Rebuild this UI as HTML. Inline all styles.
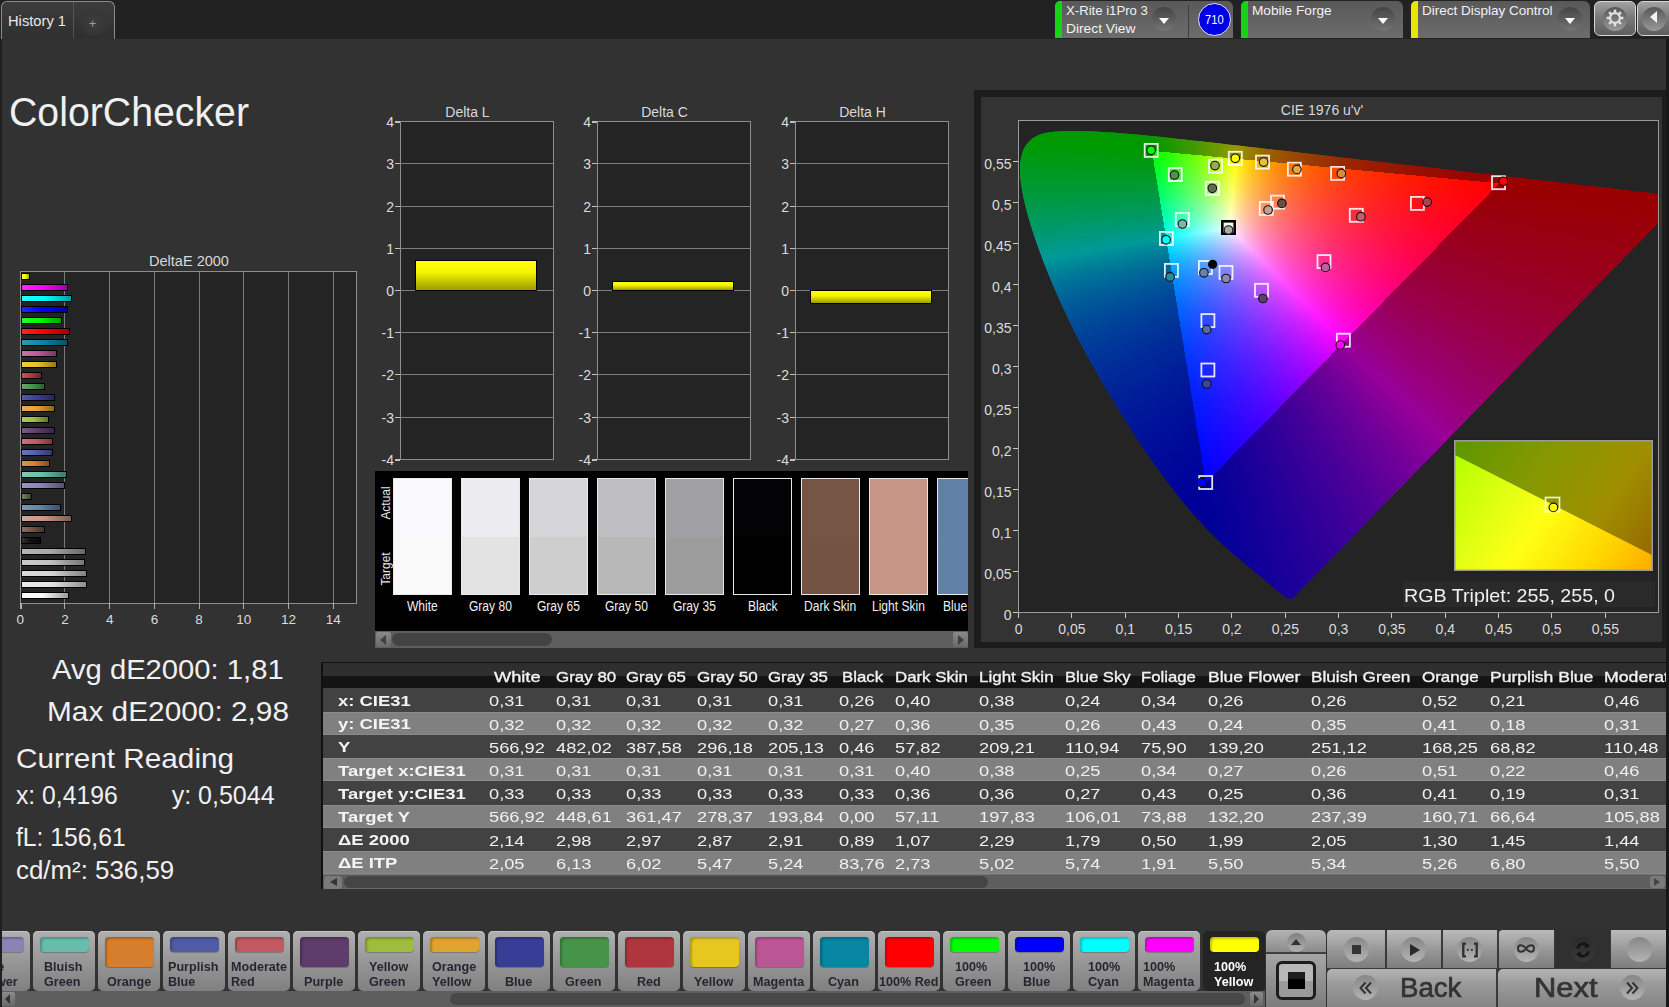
<!DOCTYPE html><html><head><meta charset="utf-8"><style>
*{margin:0;padding:0;box-sizing:border-box}
html,body{width:1669px;height:1007px;overflow:hidden;background:#323232;font-family:"Liberation Sans",sans-serif;color:#eee}
.a{position:absolute}
.t{position:absolute;white-space:nowrap;line-height:normal}
</style></head><body>
<div class="a" style="left:0px;top:0px;width:1669px;height:39px;background:#222222"></div><div class="a" style="left:1px;top:1px;width:114px;height:38px;background:linear-gradient(#3c3c3c,#2f2f2f);border:1px solid #8c8c8c;border-bottom:none;border-radius:6px 6px 0 0"></div><div class="a" style="left:73px;top:2px;width:1px;height:36px;background:#555"></div><div class="t" style="left:8.00px;top:13.33px;font-size:14px;color:#e8e8e8;transform:scaleX(1.0507);transform-origin:0 0;">History 1</div><div class="a" style="left:80.5px;top:10.5px;width:25px;height:25px;border-radius:50%;background:radial-gradient(circle at 50% 45%,#3e3e3e,#353535 70%,#2e2e2e)"></div><div class="t" style="left:88.70px;top:16.23px;font-size:13px;color:#9a9a9a;">+</div><div class="a" style="left:1055px;top:1px;width:178px;height:37px;background:linear-gradient(#595959,#6c6c6c);border-radius:6px 6px 0 0"></div><div class="a" style="left:1055px;top:1px;width:7px;height:37px;background:#14d414;border-radius:5px 0 0 0"></div><div class="t" style="left:1066.00px;top:3.23px;font-size:13px;color:#f2f2f2;transform:scaleX(1.0111);transform-origin:0 0;">X-Rite i1Pro 3</div><div class="t" style="left:1066.00px;top:21.28px;font-size:13.5px;color:#f2f2f2;transform:scaleX(1.0206);transform-origin:0 0;">Direct View</div><div class="a" style="left:1152px;top:7px;width:24px;height:24px;border-radius:50%;background:linear-gradient(#444,#747474)"></div><div class="a" style="left:1158.5px;top:18px;width:0;height:0;border-left:5.5px solid transparent;border-right:5.5px solid transparent;border-top:6px solid #fff"></div><div class="a" style="left:1188px;top:5px;width:1px;height:33px;background:#3e3e3e"></div><div class="a" style="left:1198px;top:3px;width:33px;height:33px;border-radius:50%;background:#0000e6;border:1.5px solid #e0e0ff"></div><div class="t" style="left:1205.20px;top:13.14px;font-size:12px;color:#fff;transform:scaleX(0.9300);transform-origin:0 0;">710</div><div class="a" style="left:1241px;top:1px;width:162px;height:37px;background:linear-gradient(#595959,#6c6c6c);border-radius:6px 6px 0 0"></div><div class="a" style="left:1241px;top:1px;width:7px;height:37px;background:#14d414;border-radius:5px 0 0 0"></div><div class="t" style="left:1252.00px;top:3.23px;font-size:13px;color:#f2f2f2;transform:scaleX(1.0501);transform-origin:0 0;">Mobile Forge</div><div class="a" style="left:1371px;top:7px;width:24px;height:24px;border-radius:50%;background:linear-gradient(#444,#747474)"></div><div class="a" style="left:1377.5px;top:18px;width:0;height:0;border-left:5.5px solid transparent;border-right:5.5px solid transparent;border-top:6px solid #fff"></div><div class="a" style="left:1411px;top:1px;width:179px;height:37px;background:linear-gradient(#595959,#6c6c6c);border-radius:6px 6px 0 0"></div><div class="a" style="left:1411px;top:1px;width:7px;height:37px;background:#e6e600;border-radius:5px 0 0 0"></div><div class="t" style="left:1422.00px;top:3.23px;font-size:13px;color:#f2f2f2;transform:scaleX(1.0390);transform-origin:0 0;">Direct Display Control</div><div class="a" style="left:1558px;top:7px;width:24px;height:24px;border-radius:50%;background:linear-gradient(#444,#747474)"></div><div class="a" style="left:1564.5px;top:18px;width:0;height:0;border-left:5.5px solid transparent;border-right:5.5px solid transparent;border-top:6px solid #fff"></div><div class="a" style="left:1594px;top:1px;width:42px;height:35px;background:linear-gradient(#a2a2a2,#7a7a7a 45%,#5e5e5e);border:1.2px solid #d6d6d6;border-radius:6px"></div><div class="a" style="left:1602.8px;top:6.6px;width:24px;height:24px;border-radius:50%;background:linear-gradient(#565656,#9a9a9a)"></div><svg class="a" style="left:1604.8px;top:7.9px" width="20" height="20" viewBox="0 0 20 20"><g fill="#e0e0e0"><rect x="8.75" y="1.6" width="2.5" height="4" transform="rotate(0 10 10)"/><rect x="8.75" y="1.6" width="2.5" height="4" transform="rotate(45 10 10)"/><rect x="8.75" y="1.6" width="2.5" height="4" transform="rotate(90 10 10)"/><rect x="8.75" y="1.6" width="2.5" height="4" transform="rotate(135 10 10)"/><rect x="8.75" y="1.6" width="2.5" height="4" transform="rotate(180 10 10)"/><rect x="8.75" y="1.6" width="2.5" height="4" transform="rotate(225 10 10)"/><rect x="8.75" y="1.6" width="2.5" height="4" transform="rotate(270 10 10)"/><rect x="8.75" y="1.6" width="2.5" height="4" transform="rotate(315 10 10)"/></g><circle cx="10" cy="10" r="4.9" fill="none" stroke="#e0e0e0" stroke-width="2.2"/></svg><div class="a" style="left:1637px;top:1px;width:40px;height:35px;background:linear-gradient(#a2a2a2,#7a7a7a 45%,#5e5e5e);border:1.2px solid #d6d6d6;border-radius:6px"></div><div class="a" style="left:1641.5px;top:6.6px;width:24px;height:24px;border-radius:50%;background:linear-gradient(#565656,#9a9a9a)"></div><div class="a" style="left:1650px;top:11px;width:0;height:0;border-top:6.5px solid transparent;border-bottom:6.5px solid transparent;border-right:7.5px solid #f4f4f4"></div><div class="t" style="left:8.60px;top:89.60px;font-size:40px;color:#f0f0f0;transform:scaleX(0.9816);transform-origin:0 0;">ColorChecker</div><div class="t" style="left:148.50px;top:253.13px;font-size:14px;color:#d8d8d8;transform:scaleX(1.0376);transform-origin:0 0;">DeltaE 2000</div><div class="a" style="left:20px;top:271px;width:337px;height:333px;background:#242424;border:1px solid #8e8e8e"></div><div class="a" style="left:64px;top:272px;width:1px;height:331px;background:#7a7a7a"></div><div class="a" style="left:109px;top:272px;width:1px;height:331px;background:#7a7a7a"></div><div class="a" style="left:154px;top:272px;width:1px;height:331px;background:#7a7a7a"></div><div class="a" style="left:199px;top:272px;width:1px;height:331px;background:#7a7a7a"></div><div class="a" style="left:243px;top:272px;width:1px;height:331px;background:#7a7a7a"></div><div class="a" style="left:288px;top:272px;width:1px;height:331px;background:#7a7a7a"></div><div class="a" style="left:333px;top:272px;width:1px;height:331px;background:#7a7a7a"></div><div class="a" style="left:20px;top:603px;width:2px;height:6px;background:#b0b0b0"></div><div class="t" style="left:16.55px;top:612.38px;font-size:13.5px;color:#dcdcdc;">0</div><div class="a" style="left:64px;top:603px;width:1px;height:6px;background:#b0b0b0"></div><div class="t" style="left:61.25px;top:612.38px;font-size:13.5px;color:#dcdcdc;">2</div><div class="a" style="left:109px;top:603px;width:1px;height:6px;background:#b0b0b0"></div><div class="t" style="left:105.95px;top:612.38px;font-size:13.5px;color:#dcdcdc;">4</div><div class="a" style="left:154px;top:603px;width:1px;height:6px;background:#b0b0b0"></div><div class="t" style="left:150.65px;top:612.38px;font-size:13.5px;color:#dcdcdc;">6</div><div class="a" style="left:199px;top:603px;width:1px;height:6px;background:#b0b0b0"></div><div class="t" style="left:195.35px;top:612.38px;font-size:13.5px;color:#dcdcdc;">8</div><div class="a" style="left:243px;top:603px;width:1px;height:6px;background:#b0b0b0"></div><div class="t" style="left:236.30px;top:612.38px;font-size:13.5px;color:#dcdcdc;">10</div><div class="a" style="left:288px;top:603px;width:1px;height:6px;background:#b0b0b0"></div><div class="t" style="left:281.00px;top:612.38px;font-size:13.5px;color:#dcdcdc;">12</div><div class="a" style="left:333px;top:603px;width:1px;height:6px;background:#b0b0b0"></div><div class="t" style="left:325.70px;top:612.38px;font-size:13.5px;color:#dcdcdc;">14</div><div class="a" style="left:21px;top:273px;width:9.0px;height:7px;border:1px solid #000;background:linear-gradient(90deg,#ffff26,#ffff00 45%,#9e9e00)"></div><div class="a" style="left:21px;top:284px;width:47.4px;height:7px;border:1px solid #000;background:linear-gradient(90deg,#ff26ff,#ff00ff 45%,#9e009e)"></div><div class="a" style="left:21px;top:295px;width:51.4px;height:7px;border:1px solid #000;background:linear-gradient(90deg,#26ffff,#00ffff 45%,#009e9e)"></div><div class="a" style="left:21px;top:306px;width:47.4px;height:7px;border:1px solid #000;background:linear-gradient(90deg,#2626ff,#0000ff 45%,#00009e)"></div><div class="a" style="left:21px;top:317px;width:41.1px;height:7px;border:1px solid #000;background:linear-gradient(90deg,#26ff26,#00ff00 45%,#009e00)"></div><div class="a" style="left:21px;top:328px;width:49.4px;height:7px;border:1px solid #000;background:linear-gradient(90deg,#ff2626,#ff0000 45%,#9e0000)"></div><div class="a" style="left:21px;top:339px;width:47.4px;height:7px;border:1px solid #000;background:linear-gradient(90deg,#2e99b2,#0a87a5 45%,#065366)"></div><div class="a" style="left:21px;top:350px;width:36.2px;height:7px;border:1px solid #000;background:linear-gradient(90deg,#c972a7,#c05a98 45%,#77375e)"></div><div class="a" style="left:21px;top:361px;width:35.6px;height:7px;border:1px solid #000;background:linear-gradient(90deg,#ebcc43,#e8c422 45%,#8f7915)"></div><div class="a" style="left:21px;top:372px;width:21.3px;height:7px;border:1px solid #000;background:linear-gradient(90deg,#bd575e,#b23a42 45%,#6e2328)"></div><div class="a" style="left:21px;top:383px;width:24.4px;height:7px;border:1px solid #000;background:linear-gradient(90deg,#65a566,#4a964c 45%,#2d5d2f)"></div><div class="a" style="left:21px;top:394px;width:34.4px;height:7px;border:1px solid #000;background:linear-gradient(90deg,#575ca5,#3a4096 45%,#23275d)"></div><div class="a" style="left:21px;top:405px;width:34.4px;height:7px;border:1px solid #000;background:linear-gradient(90deg,#e8af4f,#e5a230 45%,#8d641d)"></div><div class="a" style="left:21px;top:416px;width:28.4px;height:7px;border:1px solid #000;background:linear-gradient(90deg,#aec760,#a0be44 45%,#63752a)"></div><div class="a" style="left:21px;top:427px;width:34.4px;height:7px;border:1px solid #000;background:linear-gradient(90deg,#765a85,#5e3e70 45%,#3a2645)"></div><div class="a" style="left:21px;top:438px;width:31.5px;height:7px;border:1px solid #000;background:linear-gradient(90deg,#cc727b,#c45a64 45%,#79373e)"></div><div class="a" style="left:21px;top:449px;width:32.2px;height:7px;border:1px solid #000;background:linear-gradient(90deg,#6a77b6,#5060aa 45%,#313b69)"></div><div class="a" style="left:21px;top:460px;width:28.9px;height:7px;border:1px solid #000;background:linear-gradient(90deg,#de934f,#d98030 45%,#864f1d)"></div><div class="a" style="left:21px;top:471px;width:45.6px;height:7px;border:1px solid #000;background:linear-gradient(90deg,#80c9b6,#6ac0aa 45%,#417769)"></div><div class="a" style="left:21px;top:482px;width:44.3px;height:7px;border:1px solid #000;background:linear-gradient(90deg,#9996c0,#8884b6 45%,#545170)"></div><div class="a" style="left:21px;top:493px;width:11.0px;height:7px;border:1px solid #000;background:linear-gradient(90deg,#718360,#596e44 45%,#37442a)"></div><div class="a" style="left:21px;top:504px;width:39.8px;height:7px;border:1px solid #000;background:linear-gradient(90deg,#7996b8,#6284ac 45%,#3c516a)"></div><div class="a" style="left:21px;top:515px;width:51.0px;height:7px;border:1px solid #000;background:linear-gradient(90deg,#d0a798,#c89886 45%,#7c5e53)"></div><div class="a" style="left:21px;top:526px;width:23.7px;height:7px;border:1px solid #000;background:linear-gradient(90deg,#8a6d61,#765446 45%,#49342b)"></div><div class="a" style="left:21px;top:537px;width:19.7px;height:7px;border:1px solid #000;background:linear-gradient(90deg,#333333,#101010 45%,#090909)"></div><div class="a" style="left:21px;top:548px;width:64.8px;height:7px;border:1px solid #000;background:linear-gradient(90deg,#b5b5b5,#a8a8a8 45%,#686868)"></div><div class="a" style="left:21px;top:559px;width:63.9px;height:7px;border:1px solid #000;background:linear-gradient(90deg,#c9c9c9,#c0c0c0 45%,#777777)"></div><div class="a" style="left:21px;top:570px;width:66.2px;height:7px;border:1px solid #000;background:linear-gradient(90deg,#dadada,#d4d4d4 45%,#838383)"></div><div class="a" style="left:21px;top:581px;width:66.4px;height:7px;border:1px solid #000;background:linear-gradient(90deg,#e9e9e9,#e6e6e6 45%,#8e8e8e)"></div><div class="a" style="left:21px;top:592px;width:47.6px;height:7px;border:1px solid #000;background:linear-gradient(90deg,#fafafa,#fafafa 45%,#9b9b9b)"></div><div class="t" style="left:445.30px;top:104.33px;font-size:14px;color:#d8d8d8;">Delta L</div><div class="a" style="left:400px;top:121px;width:154px;height:339px;background:#242424;border:1px solid #8e8e8e"></div><div class="a" style="left:401px;top:163px;width:152px;height:1px;background:#7e7e7e"></div><div class="a" style="left:401px;top:206px;width:152px;height:1px;background:#7e7e7e"></div><div class="a" style="left:401px;top:248px;width:152px;height:1px;background:#7e7e7e"></div><div class="a" style="left:401px;top:290px;width:152px;height:1px;background:#7e7e7e"></div><div class="a" style="left:401px;top:332px;width:152px;height:1px;background:#7e7e7e"></div><div class="a" style="left:401px;top:374px;width:152px;height:1px;background:#7e7e7e"></div><div class="a" style="left:401px;top:417px;width:152px;height:1px;background:#7e7e7e"></div><div class="a" style="left:395px;top:121px;width:5px;height:2px;background:#c0c0c0"></div><div class="t" style="left:386.20px;top:114.33px;font-size:14px;color:#dcdcdc;">4</div><div class="a" style="left:395px;top:163px;width:5px;height:1px;background:#c0c0c0"></div><div class="t" style="left:386.20px;top:156.33px;font-size:14px;color:#dcdcdc;">3</div><div class="a" style="left:395px;top:206px;width:5px;height:1px;background:#c0c0c0"></div><div class="t" style="left:386.20px;top:199.33px;font-size:14px;color:#dcdcdc;">2</div><div class="a" style="left:395px;top:248px;width:5px;height:1px;background:#c0c0c0"></div><div class="t" style="left:386.20px;top:241.33px;font-size:14px;color:#dcdcdc;">1</div><div class="a" style="left:395px;top:290px;width:5px;height:1px;background:#c0c0c0"></div><div class="t" style="left:386.20px;top:283.33px;font-size:14px;color:#dcdcdc;">0</div><div class="a" style="left:395px;top:332px;width:5px;height:1px;background:#c0c0c0"></div><div class="t" style="left:381.60px;top:325.33px;font-size:14px;color:#dcdcdc;">-1</div><div class="a" style="left:395px;top:374px;width:5px;height:1px;background:#c0c0c0"></div><div class="t" style="left:381.60px;top:367.33px;font-size:14px;color:#dcdcdc;">-2</div><div class="a" style="left:395px;top:417px;width:5px;height:1px;background:#c0c0c0"></div><div class="t" style="left:381.60px;top:410.33px;font-size:14px;color:#dcdcdc;">-3</div><div class="a" style="left:395px;top:459px;width:5px;height:2px;background:#c0c0c0"></div><div class="t" style="left:381.60px;top:452.33px;font-size:14px;color:#dcdcdc;">-4</div><div class="a" style="left:415px;top:259.6px;width:122px;height:31.4px;border:1.5px solid #000;background:linear-gradient(#ffff10,#f4f400 40%,#9a9a00)"></div><div class="t" style="left:641.15px;top:104.33px;font-size:14px;color:#d8d8d8;">Delta C</div><div class="a" style="left:597px;top:121px;width:154px;height:339px;background:#242424;border:1px solid #8e8e8e"></div><div class="a" style="left:598px;top:163px;width:152px;height:1px;background:#7e7e7e"></div><div class="a" style="left:598px;top:206px;width:152px;height:1px;background:#7e7e7e"></div><div class="a" style="left:598px;top:248px;width:152px;height:1px;background:#7e7e7e"></div><div class="a" style="left:598px;top:290px;width:152px;height:1px;background:#7e7e7e"></div><div class="a" style="left:598px;top:332px;width:152px;height:1px;background:#7e7e7e"></div><div class="a" style="left:598px;top:374px;width:152px;height:1px;background:#7e7e7e"></div><div class="a" style="left:598px;top:417px;width:152px;height:1px;background:#7e7e7e"></div><div class="a" style="left:592px;top:121px;width:5px;height:2px;background:#c0c0c0"></div><div class="t" style="left:583.20px;top:114.33px;font-size:14px;color:#dcdcdc;">4</div><div class="a" style="left:592px;top:163px;width:5px;height:1px;background:#c0c0c0"></div><div class="t" style="left:583.20px;top:156.33px;font-size:14px;color:#dcdcdc;">3</div><div class="a" style="left:592px;top:206px;width:5px;height:1px;background:#c0c0c0"></div><div class="t" style="left:583.20px;top:199.33px;font-size:14px;color:#dcdcdc;">2</div><div class="a" style="left:592px;top:248px;width:5px;height:1px;background:#c0c0c0"></div><div class="t" style="left:583.20px;top:241.33px;font-size:14px;color:#dcdcdc;">1</div><div class="a" style="left:592px;top:290px;width:5px;height:1px;background:#c0c0c0"></div><div class="t" style="left:583.20px;top:283.33px;font-size:14px;color:#dcdcdc;">0</div><div class="a" style="left:592px;top:332px;width:5px;height:1px;background:#c0c0c0"></div><div class="t" style="left:578.60px;top:325.33px;font-size:14px;color:#dcdcdc;">-1</div><div class="a" style="left:592px;top:374px;width:5px;height:1px;background:#c0c0c0"></div><div class="t" style="left:578.60px;top:367.33px;font-size:14px;color:#dcdcdc;">-2</div><div class="a" style="left:592px;top:417px;width:5px;height:1px;background:#c0c0c0"></div><div class="t" style="left:578.60px;top:410.33px;font-size:14px;color:#dcdcdc;">-3</div><div class="a" style="left:592px;top:459px;width:5px;height:2px;background:#c0c0c0"></div><div class="t" style="left:578.60px;top:452.33px;font-size:14px;color:#dcdcdc;">-4</div><div class="a" style="left:612px;top:281.1px;width:122px;height:9.9px;border:1.5px solid #000;background:linear-gradient(#ffff10,#f4f400 40%,#9a9a00)"></div><div class="t" style="left:839.15px;top:104.33px;font-size:14px;color:#d8d8d8;">Delta H</div><div class="a" style="left:795px;top:121px;width:154px;height:339px;background:#242424;border:1px solid #8e8e8e"></div><div class="a" style="left:796px;top:163px;width:152px;height:1px;background:#7e7e7e"></div><div class="a" style="left:796px;top:206px;width:152px;height:1px;background:#7e7e7e"></div><div class="a" style="left:796px;top:248px;width:152px;height:1px;background:#7e7e7e"></div><div class="a" style="left:796px;top:290px;width:152px;height:1px;background:#7e7e7e"></div><div class="a" style="left:796px;top:332px;width:152px;height:1px;background:#7e7e7e"></div><div class="a" style="left:796px;top:374px;width:152px;height:1px;background:#7e7e7e"></div><div class="a" style="left:796px;top:417px;width:152px;height:1px;background:#7e7e7e"></div><div class="a" style="left:790px;top:121px;width:5px;height:2px;background:#c0c0c0"></div><div class="t" style="left:781.20px;top:114.33px;font-size:14px;color:#dcdcdc;">4</div><div class="a" style="left:790px;top:163px;width:5px;height:1px;background:#c0c0c0"></div><div class="t" style="left:781.20px;top:156.33px;font-size:14px;color:#dcdcdc;">3</div><div class="a" style="left:790px;top:206px;width:5px;height:1px;background:#c0c0c0"></div><div class="t" style="left:781.20px;top:199.33px;font-size:14px;color:#dcdcdc;">2</div><div class="a" style="left:790px;top:248px;width:5px;height:1px;background:#c0c0c0"></div><div class="t" style="left:781.20px;top:241.33px;font-size:14px;color:#dcdcdc;">1</div><div class="a" style="left:790px;top:290px;width:5px;height:1px;background:#c0c0c0"></div><div class="t" style="left:781.20px;top:283.33px;font-size:14px;color:#dcdcdc;">0</div><div class="a" style="left:790px;top:332px;width:5px;height:1px;background:#c0c0c0"></div><div class="t" style="left:776.60px;top:325.33px;font-size:14px;color:#dcdcdc;">-1</div><div class="a" style="left:790px;top:374px;width:5px;height:1px;background:#c0c0c0"></div><div class="t" style="left:776.60px;top:367.33px;font-size:14px;color:#dcdcdc;">-2</div><div class="a" style="left:790px;top:417px;width:5px;height:1px;background:#c0c0c0"></div><div class="t" style="left:776.60px;top:410.33px;font-size:14px;color:#dcdcdc;">-3</div><div class="a" style="left:790px;top:459px;width:5px;height:2px;background:#c0c0c0"></div><div class="t" style="left:776.60px;top:452.33px;font-size:14px;color:#dcdcdc;">-4</div><div class="a" style="left:810px;top:290.0px;width:122px;height:13.7px;border:1.5px solid #000;background:linear-gradient(#ffff10,#f4f400 40%,#9a9a00)"></div><div class="a" style="left:375px;top:471px;width:593px;height:160px;background:#000"></div><div class="a" style="left:375px;top:471px;width:593px;height:160px;overflow:hidden"><div class="a" style="left:18px;top:7px;width:59px;height:117px;border:1px solid #e8e8e8;background:linear-gradient(#f8f8fd 50%,#f9f9f9 50%)"></div><div class="a" style="left:86px;top:7px;width:59px;height:117px;border:1px solid #e8e8e8;background:linear-gradient(#ececf0 50%,#e3e3e3 50%)"></div><div class="a" style="left:154px;top:7px;width:59px;height:117px;border:1px solid #e8e8e8;background:linear-gradient(#d6d6da 50%,#cecece 50%)"></div><div class="a" style="left:222px;top:7px;width:59px;height:117px;border:1px solid #e8e8e8;background:linear-gradient(#bfbfc3 50%,#b8b8b8 50%)"></div><div class="a" style="left:290px;top:7px;width:59px;height:117px;border:1px solid #e8e8e8;background:linear-gradient(#a1a1a5 50%,#9c9c9c 50%)"></div><div class="a" style="left:358px;top:7px;width:59px;height:117px;border:1px solid #e8e8e8;background:linear-gradient(#040407 50%,#000000 50%)"></div><div class="a" style="left:426px;top:7px;width:59px;height:117px;border:1px solid #e8e8e8;background:linear-gradient(#765446 50%,#755344 50%)"></div><div class="a" style="left:494px;top:7px;width:59px;height:117px;border:1px solid #e8e8e8;background:linear-gradient(#c69585 50%,#c69584 50%)"></div><div class="a" style="left:562px;top:7px;width:59px;height:117px;border:1px solid #e8e8e8;background:linear-gradient(#6180a8 50%,#6181a9 50%)"></div></div><div class="a" style="left:375px;top:471px;width:593px;height:160px;overflow:hidden"><div class="t" style="left:32.1px;top:126.9px;font-size:14px;color:#f0f0f0;transform:scaleX(0.86);transform-origin:0 0">White</div><div class="t" style="left:94.1px;top:126.9px;font-size:14px;color:#f0f0f0;transform:scaleX(0.86);transform-origin:0 0">Gray 80</div><div class="t" style="left:162.1px;top:126.9px;font-size:14px;color:#f0f0f0;transform:scaleX(0.86);transform-origin:0 0">Gray 65</div><div class="t" style="left:230.1px;top:126.9px;font-size:14px;color:#f0f0f0;transform:scaleX(0.86);transform-origin:0 0">Gray 50</div><div class="t" style="left:298.1px;top:126.9px;font-size:14px;color:#f0f0f0;transform:scaleX(0.86);transform-origin:0 0">Gray 35</div><div class="t" style="left:372.8px;top:126.9px;font-size:14px;color:#f0f0f0;transform:scaleX(0.86);transform-origin:0 0">Black</div><div class="t" style="left:429.4px;top:126.9px;font-size:14px;color:#f0f0f0;transform:scaleX(0.86);transform-origin:0 0">Dark Skin</div><div class="t" style="left:497.1px;top:126.9px;font-size:14px;color:#f0f0f0;transform:scaleX(0.86);transform-origin:0 0">Light Skin</div><div class="t" style="left:567.8px;top:126.9px;font-size:14px;color:#f0f0f0;transform:scaleX(0.86);transform-origin:0 0">Blue Sky</div></div><div class="t" style="left:384.5px;top:503px;font-size:13px;color:#e8e8e8;transform:translate(-50%,-50%) rotate(-90deg) scaleX(0.92)">Actual</div><div class="t" style="left:384.5px;top:569px;font-size:13px;color:#e8e8e8;transform:translate(-50%,-50%) rotate(-90deg) scaleX(0.92)">Target</div><div class="a" style="left:375px;top:631px;width:593px;height:17px;background:#5e5e5e"></div><div class="a" style="left:392px;top:633px;width:160px;height:13px;background:#434343;border-radius:7px"></div><div class="a" style="left:376px;top:632px;width:15px;height:15px;background:linear-gradient(#8a8a8a,#6a6a6a);border-radius:2px"></div><div class="a" style="left:380px;top:635px;width:0;height:0;border-top:5px solid transparent;border-bottom:5px solid transparent;border-right:6px solid #404040"></div><div class="a" style="left:953px;top:632px;width:15px;height:15px;background:linear-gradient(#8a8a8a,#6a6a6a);border-radius:2px"></div><div class="a" style="left:958px;top:635px;width:0;height:0;border-top:5px solid transparent;border-bottom:5px solid transparent;border-left:6px solid #404040"></div><div class="t" style="left:51.50px;top:654.46px;font-size:28px;color:#f0f0f0;transform:scaleX(1.0428);transform-origin:0 0;">Avg dE2000: 1,81</div><div class="t" style="left:47.00px;top:695.56px;font-size:28px;color:#f0f0f0;transform:scaleX(1.0647);transform-origin:0 0;">Max dE2000: 2,98</div><div class="t" style="left:15.60px;top:743.46px;font-size:28px;color:#f0f0f0;transform:scaleX(1.0613);transform-origin:0 0;">Current Reading</div><div class="t" style="left:15.60px;top:780.98px;font-size:25px;color:#f0f0f0;transform:scaleX(0.9893);transform-origin:0 0;">x: 0,4196</div><div class="t" style="left:171.70px;top:780.98px;font-size:25px;color:#f0f0f0;">y: 0,5044</div><div class="t" style="left:15.60px;top:822.58px;font-size:25px;color:#f0f0f0;transform:scaleX(0.9856);transform-origin:0 0;">fL: 156,61</div><div class="t" style="left:15.60px;top:856.17px;font-size:25px;color:#f0f0f0;transform:scaleX(1.0347);transform-origin:0 0;">cd/m²: 536,59</div><div class="a" style="left:974px;top:90px;width:695px;height:558px;background:#1c1c1c"></div><div class="a" style="left:981px;top:97px;width:681px;height:545px;background:#333333"></div><div class="t" style="left:1280.80px;top:101.83px;font-size:14px;color:#d8d8d8;">CIE 1976 u'v'</div><div class="a" style="left:1018px;top:120px;width:641px;height:493px;background:#242424;border:1px solid #9a9a9a"></div><div class="a" style="left:1013px;top:612px;width:5px;height:1px;background:#c8c8c8"></div><div class="t" style="left:1003.70px;top:606.93px;font-size:14px;color:#dcdcdc;">0</div><div class="a" style="left:1018px;top:613px;width:1px;height:5px;background:#c8c8c8"></div><div class="t" style="left:1014.70px;top:620.63px;font-size:14px;color:#dcdcdc;">0</div><div class="a" style="left:1013px;top:571px;width:5px;height:1px;background:#c8c8c8"></div><div class="t" style="left:984.30px;top:565.93px;font-size:14px;color:#dcdcdc;">0,05</div><div class="a" style="left:1071px;top:613px;width:1px;height:5px;background:#c8c8c8"></div><div class="t" style="left:1058.34px;top:620.63px;font-size:14px;color:#dcdcdc;">0,05</div><div class="a" style="left:1013px;top:530px;width:5px;height:1px;background:#c8c8c8"></div><div class="t" style="left:992.00px;top:524.93px;font-size:14px;color:#dcdcdc;">0,1</div><div class="a" style="left:1125px;top:613px;width:1px;height:5px;background:#c8c8c8"></div><div class="t" style="left:1115.52px;top:620.63px;font-size:14px;color:#dcdcdc;">0,1</div><div class="a" style="left:1013px;top:489px;width:5px;height:1px;background:#c8c8c8"></div><div class="t" style="left:984.30px;top:483.93px;font-size:14px;color:#dcdcdc;">0,15</div><div class="a" style="left:1178px;top:613px;width:1px;height:5px;background:#c8c8c8"></div><div class="t" style="left:1165.01px;top:620.63px;font-size:14px;color:#dcdcdc;">0,15</div><div class="a" style="left:1013px;top:448px;width:5px;height:1px;background:#c8c8c8"></div><div class="t" style="left:992.00px;top:442.93px;font-size:14px;color:#dcdcdc;">0,2</div><div class="a" style="left:1231px;top:613px;width:1px;height:5px;background:#c8c8c8"></div><div class="t" style="left:1222.19px;top:620.63px;font-size:14px;color:#dcdcdc;">0,2</div><div class="a" style="left:1013px;top:407px;width:5px;height:1px;background:#c8c8c8"></div><div class="t" style="left:984.30px;top:401.93px;font-size:14px;color:#dcdcdc;">0,25</div><div class="a" style="left:1285px;top:613px;width:1px;height:5px;background:#c8c8c8"></div><div class="t" style="left:1271.68px;top:620.63px;font-size:14px;color:#dcdcdc;">0,25</div><div class="a" style="left:1013px;top:366px;width:5px;height:1px;background:#c8c8c8"></div><div class="t" style="left:992.00px;top:360.93px;font-size:14px;color:#dcdcdc;">0,3</div><div class="a" style="left:1338px;top:613px;width:1px;height:5px;background:#c8c8c8"></div><div class="t" style="left:1328.86px;top:620.63px;font-size:14px;color:#dcdcdc;">0,3</div><div class="a" style="left:1013px;top:325px;width:5px;height:1px;background:#c8c8c8"></div><div class="t" style="left:984.30px;top:319.93px;font-size:14px;color:#dcdcdc;">0,35</div><div class="a" style="left:1391px;top:613px;width:1px;height:5px;background:#c8c8c8"></div><div class="t" style="left:1378.35px;top:620.63px;font-size:14px;color:#dcdcdc;">0,35</div><div class="a" style="left:1013px;top:284px;width:5px;height:1px;background:#c8c8c8"></div><div class="t" style="left:992.00px;top:278.93px;font-size:14px;color:#dcdcdc;">0,4</div><div class="a" style="left:1445px;top:613px;width:1px;height:5px;background:#c8c8c8"></div><div class="t" style="left:1435.53px;top:620.63px;font-size:14px;color:#dcdcdc;">0,4</div><div class="a" style="left:1013px;top:243px;width:5px;height:1px;background:#c8c8c8"></div><div class="t" style="left:984.30px;top:237.93px;font-size:14px;color:#dcdcdc;">0,45</div><div class="a" style="left:1498px;top:613px;width:1px;height:5px;background:#c8c8c8"></div><div class="t" style="left:1485.02px;top:620.63px;font-size:14px;color:#dcdcdc;">0,45</div><div class="a" style="left:1013px;top:202px;width:5px;height:1px;background:#c8c8c8"></div><div class="t" style="left:992.00px;top:196.93px;font-size:14px;color:#dcdcdc;">0,5</div><div class="a" style="left:1551px;top:613px;width:1px;height:5px;background:#c8c8c8"></div><div class="t" style="left:1542.20px;top:620.63px;font-size:14px;color:#dcdcdc;">0,5</div><div class="a" style="left:1013px;top:161px;width:5px;height:1px;background:#c8c8c8"></div><div class="t" style="left:984.30px;top:155.93px;font-size:14px;color:#dcdcdc;">0,55</div><div class="a" style="left:1605px;top:613px;width:1px;height:5px;background:#c8c8c8"></div><div class="t" style="left:1591.69px;top:620.63px;font-size:14px;color:#dcdcdc;">0,55</div><div class="a" style="left:1019px;top:121px;width:639px;height:491px;overflow:hidden;clip-path:path('M273.53,477.49 L273.47,477.54 L273.37,477.61 L273.26,477.69 L273.12,477.76 L272.97,477.84 L272.79,477.91 L272.59,477.98 L272.35,478.03 L272.11,478.07 L271.84,478.10 L271.52,478.10 L271.11,478.04 L270.59,477.92 L269.97,477.76 L269.30,477.54 L268.63,477.25 L267.98,476.89 L267.32,476.46 L266.63,475.97 L265.86,475.42 L265.04,474.81 L264.16,474.14 L263.21,473.40 L262.14,472.55 L260.94,471.60 L259.63,470.55 L258.23,469.41 L256.74,468.18 L255.18,466.87 L253.54,465.46 L251.80,463.97 L249.94,462.39 L247.98,460.76 L245.92,459.05 L243.73,457.24 L241.35,455.28 L238.77,453.17 L236.02,450.93 L233.11,448.55 L230.07,446.04 L226.91,443.44 L223.62,440.74 L220.17,437.85 L216.50,434.70 L212.63,431.33 L208.57,427.75 L204.31,423.89 L199.84,419.67 L195.23,415.22 L190.45,410.55 L185.37,405.34 L179.83,399.30 L173.77,392.40 L167.27,384.76 L160.41,376.40 L153.29,367.29 L145.85,357.43 L138.08,346.81 L130.08,335.49 L121.94,323.51 L113.60,310.75 L105.03,297.21 L96.41,283.21 L87.94,269.02 L79.50,254.55 L71.05,239.69 L62.86,224.77 L55.21,210.10 L48.12,195.58 L41.46,181.11 L35.28,166.99 L29.64,153.52 L24.52,140.69 L19.92,128.36 L15.84,116.68 L12.28,105.83 L9.29,95.85 L6.85,86.67 L4.87,78.20 L3.30,70.39 L2.15,63.28 L1.44,56.89 L1.12,51.08 L1.13,45.71 L1.48,40.78 L2.20,36.36 L3.23,32.37 L4.55,28.75 L6.18,25.50 L8.12,22.65 L10.32,20.16 L12.70,17.99 L15.30,16.16 L18.13,14.69 L21.13,13.50 L24.26,12.49 L27.51,11.71 L30.92,11.17 L34.43,10.78 L38.01,10.46 L41.66,10.21 L45.41,10.07 L49.21,10.00 L53.00,9.96 L56.77,9.95 L60.56,9.98 L64.37,10.05 L68.23,10.15 L72.12,10.29 L76.05,10.46 L80.04,10.66 L84.11,10.89 L88.27,11.16 L92.50,11.45 L96.81,11.78 L101.22,12.13 L105.72,12.51 L110.31,12.91 L115.01,13.35 L119.82,13.80 L124.75,14.28 L129.78,14.79 L134.94,15.32 L140.25,15.87 L145.71,16.44 L151.29,17.03 L157.03,17.65 L162.91,18.29 L168.94,18.96 L175.12,19.65 L181.46,20.36 L187.96,21.09 L194.65,21.84 L201.50,22.61 L208.52,23.41 L215.71,24.22 L223.07,25.06 L230.60,25.92 L238.31,26.81 L246.19,27.71 L254.25,28.64 L262.48,29.59 L270.88,30.55 L279.44,31.54 L288.17,32.54 L297.08,33.57 L306.13,34.61 L315.30,35.66 L324.61,36.73 L334.08,37.81 L343.63,38.90 L353.24,40.01 L362.94,41.12 L372.73,42.26 L382.53,43.39 L392.21,44.51 L401.76,45.61 L411.24,46.69 L420.64,47.77 L429.99,48.85 L439.33,49.92 L448.65,50.99 L457.83,52.04 L466.75,53.07 L475.42,54.05 L483.87,55.01 L492.09,55.95 L500.06,56.86 L507.80,57.75 L515.30,58.61 L522.54,59.45 L529.50,60.26 L536.17,61.03 L542.56,61.76 L548.68,62.47 L554.56,63.15 L560.17,63.79 L565.51,64.40 L570.62,64.98 L575.53,65.54 L580.24,66.08 L584.73,66.60 L589.04,67.10 L593.22,67.58 L597.28,68.05 L601.19,68.50 L604.95,68.93 L608.56,69.35 L612.02,69.75 L615.34,70.13 L618.51,70.50 L621.52,70.84 L624.38,71.17 L627.07,71.47 L629.61,71.75 L632.01,72.02 L634.25,72.28 L636.34,72.52 L638.30,72.75 L640.15,72.96 L641.90,73.16 L643.53,73.35 L645.06,73.53 L646.49,73.69 L647.76,73.84 L648.90,73.97 L650.01,74.10 L651.22,74.24 L652.52,74.39 L653.86,74.54 L655.28,74.71 L656.86,74.89 L658.82,75.11 L661.07,75.37 L663.14,75.61 L664.57,75.78 Z')"><div class="a" style="left:0;top:0;width:639px;height:491px;background:conic-gradient(from 5deg at 210.6px 107.1px,#999900 0deg,#990000 75deg,#990099 130deg,#000099 181deg,#009999 255deg,#009900 310deg,#999900 360deg)"></div><div class="a" style="left:0;top:0;width:639px;height:491px;clip-path:polygon(132.9px 29.85px,480.4px 62.3px,186.7px 361.6px);background:radial-gradient(circle at 210.6px 107.1px,#fff 0,rgba(255,255,255,0.55) 22px,rgba(255,255,255,0) 80px),conic-gradient(from 5deg at 210.6px 107.1px,#ffff00 0deg,#ff0000 75deg,#ff00ff 130deg,#0000ff 181deg,#00ffff 255deg,#00ff00 310deg,#ffff00 360deg)"></div></div><canvas id="cie" class="a" style="left:1019px;top:121px" width="639" height="491"></canvas><script>
(function(){
var P=[[273.53,477.49],[273.47,477.54],[273.37,477.61],[273.26,477.69],[273.12,477.76],[272.97,477.84],[272.79,477.91],[272.59,477.98],[272.35,478.03],[272.11,478.07],[271.84,478.10],[271.52,478.10],[271.11,478.04],[270.59,477.92],[269.97,477.76],[269.30,477.54],[268.63,477.25],[267.98,476.89],[267.32,476.46],[266.63,475.97],[265.86,475.42],[265.04,474.81],[264.16,474.14],[263.21,473.40],[262.14,472.55],[260.94,471.60],[259.63,470.55],[258.23,469.41],[256.74,468.18],[255.18,466.87],[253.54,465.46],[251.80,463.97],[249.94,462.39],[247.98,460.76],[245.92,459.05],[243.73,457.24],[241.35,455.28],[238.77,453.17],[236.02,450.93],[233.11,448.55],[230.07,446.04],[226.91,443.44],[223.62,440.74],[220.17,437.85],[216.50,434.70],[212.63,431.33],[208.57,427.75],[204.31,423.89],[199.84,419.67],[195.23,415.22],[190.45,410.55],[185.37,405.34],[179.83,399.30],[173.77,392.40],[167.27,384.76],[160.41,376.40],[153.29,367.29],[145.85,357.43],[138.08,346.81],[130.08,335.49],[121.94,323.51],[113.60,310.75],[105.03,297.21],[96.41,283.21],[87.94,269.02],[79.50,254.55],[71.05,239.69],[62.86,224.77],[55.21,210.10],[48.12,195.58],[41.46,181.11],[35.28,166.99],[29.64,153.52],[24.52,140.69],[19.92,128.36],[15.84,116.68],[12.28,105.83],[9.29,95.85],[6.85,86.67],[4.87,78.20],[3.30,70.39],[2.15,63.28],[1.44,56.89],[1.12,51.08],[1.13,45.71],[1.48,40.78],[2.20,36.36],[3.23,32.37],[4.55,28.75],[6.18,25.50],[8.12,22.65],[10.32,20.16],[12.70,17.99],[15.30,16.16],[18.13,14.69],[21.13,13.50],[24.26,12.49],[27.51,11.71],[30.92,11.17],[34.43,10.78],[38.01,10.46],[41.66,10.21],[45.41,10.07],[49.21,10.00],[53.00,9.96],[56.77,9.95],[60.56,9.98],[64.37,10.05],[68.23,10.15],[72.12,10.29],[76.05,10.46],[80.04,10.66],[84.11,10.89],[88.27,11.16],[92.50,11.45],[96.81,11.78],[101.22,12.13],[105.72,12.51],[110.31,12.91],[115.01,13.35],[119.82,13.80],[124.75,14.28],[129.78,14.79],[134.94,15.32],[140.25,15.87],[145.71,16.44],[151.29,17.03],[157.03,17.65],[162.91,18.29],[168.94,18.96],[175.12,19.65],[181.46,20.36],[187.96,21.09],[194.65,21.84],[201.50,22.61],[208.52,23.41],[215.71,24.22],[223.07,25.06],[230.60,25.92],[238.31,26.81],[246.19,27.71],[254.25,28.64],[262.48,29.59],[270.88,30.55],[279.44,31.54],[288.17,32.54],[297.08,33.57],[306.13,34.61],[315.30,35.66],[324.61,36.73],[334.08,37.81],[343.63,38.90],[353.24,40.01],[362.94,41.12],[372.73,42.26],[382.53,43.39],[392.21,44.51],[401.76,45.61],[411.24,46.69],[420.64,47.77],[429.99,48.85],[439.33,49.92],[448.65,50.99],[457.83,52.04],[466.75,53.07],[475.42,54.05],[483.87,55.01],[492.09,55.95],[500.06,56.86],[507.80,57.75],[515.30,58.61],[522.54,59.45],[529.50,60.26],[536.17,61.03],[542.56,61.76],[548.68,62.47],[554.56,63.15],[560.17,63.79],[565.51,64.40],[570.62,64.98],[575.53,65.54],[580.24,66.08],[584.73,66.60],[589.04,67.10],[593.22,67.58],[597.28,68.05],[601.19,68.50],[604.95,68.93],[608.56,69.35],[612.02,69.75],[615.34,70.13],[618.51,70.50],[621.52,70.84],[624.38,71.17],[627.07,71.47],[629.61,71.75],[632.01,72.02],[634.25,72.28],[636.34,72.52],[638.30,72.75],[640.15,72.96],[641.90,73.16],[643.53,73.35],[645.06,73.53],[646.49,73.69],[647.76,73.84],[648.90,73.97],[650.01,74.10],[651.22,74.24],[652.52,74.39],[653.86,74.54],[655.28,74.71],[656.86,74.89],[658.82,75.11],[661.07,75.37],[663.14,75.61],[664.57,75.78]];
var cv=document.getElementById('cie');if(!cv.getContext)return;var ctx=cv.getContext('2d');
var W=639,H=491,OX=1018.6-1019,OY=612.1-121,SX=1066.7,SY=820;
var off=document.createElement('canvas');off.width=W;off.height=H;var oc=off.getContext('2d');
var img=oc.createImageData(W,H),d=img.data;
for(var py=0;py<H;py++){for(var px=0;px<W;px++){
 var u=(px+0.5-OX)/SX,v=(OY-(py+0.5))/SY;if(v<0.001)v=0.001;
 var den=6*u-16*v+12,x=9*u/den,y=4*v/den;
 var X=x/y,Z=(1-x-y)/y;
 var r=3.2406*X-1.5372-0.4986*Z,g=-0.9689*X+1.8758+0.0415*Z,b=0.0557*X-0.2040+1.0570*Z;
 var out=(r<0||g<0||b<0);
 if(r<0)r=0;if(g<0)g=0;if(b<0)b=0;
 var m=Math.max(r,g,b);if(m<=0)m=1;r/=m;g/=m;b/=m;
 r=Math.pow(r,1.0);g=Math.pow(g,1.0);b=Math.pow(b,1.0);
 var k=out?0.6:1;
 var i=(py*W+px)*4;d[i]=r*255*k;d[i+1]=g*255*k;d[i+2]=b*255*k;d[i+3]=255;
}}
oc.putImageData(img,0,0);
ctx.beginPath();for(var j=0;j<P.length;j++){if(j)ctx.lineTo(P[j][0],P[j][1]);else ctx.moveTo(P[j][0],P[j][1]);}
ctx.closePath();ctx.save();ctx.clip();ctx.drawImage(off,0,0);ctx.restore();
})();
</script><svg class="a" style="left:974px;top:90px" width="695" height="558" viewBox="974 90 695 558"><rect x="1144.7" y="143.9" width="13" height="13" fill="none" stroke="#fff" stroke-opacity="0.88" stroke-width="1.8"/><rect x="1168.8" y="168.0" width="13" height="13" fill="none" stroke="#fff" stroke-opacity="0.88" stroke-width="1.8"/><rect x="1209.0" y="159.7" width="13" height="13" fill="none" stroke="#fff" stroke-opacity="0.88" stroke-width="1.8"/><rect x="1228.8" y="151.8" width="13" height="13" fill="none" stroke="#fff" stroke-opacity="0.88" stroke-width="1.8"/><rect x="1256.0" y="155.6" width="13" height="13" fill="none" stroke="#fff" stroke-opacity="0.88" stroke-width="1.8"/><rect x="1287.9" y="162.7" width="13" height="13" fill="none" stroke="#fff" stroke-opacity="0.88" stroke-width="1.8"/><rect x="1331.1" y="166.9" width="13" height="13" fill="none" stroke="#fff" stroke-opacity="0.88" stroke-width="1.8"/><rect x="1492.0" y="176.2" width="13" height="13" fill="none" stroke="#fff" stroke-opacity="0.88" stroke-width="1.8"/><rect x="1205.8" y="181.8" width="13" height="13" fill="none" stroke="#fff" stroke-opacity="0.88" stroke-width="1.8"/><rect x="1271.0" y="195.6" width="13" height="13" fill="none" stroke="#fff" stroke-opacity="0.88" stroke-width="1.8"/><rect x="1259.8" y="201.9" width="13" height="13" fill="none" stroke="#fff" stroke-opacity="0.88" stroke-width="1.8"/><rect x="1349.8" y="208.8" width="13" height="13" fill="none" stroke="#fff" stroke-opacity="0.88" stroke-width="1.8"/><rect x="1410.9" y="196.9" width="13" height="13" fill="none" stroke="#fff" stroke-opacity="0.88" stroke-width="1.8"/><rect x="1175.8" y="213.0" width="13" height="13" fill="none" stroke="#fff" stroke-opacity="0.88" stroke-width="1.8"/><rect x="1159.9" y="231.9" width="13" height="13" fill="none" stroke="#fff" stroke-opacity="0.88" stroke-width="1.8"/><rect x="1164.9" y="263.9" width="13" height="13" fill="none" stroke="#fff" stroke-opacity="0.88" stroke-width="1.8"/><rect x="1198.9" y="261.0" width="13" height="13" fill="none" stroke="#fff" stroke-opacity="0.88" stroke-width="1.8"/><rect x="1219.5" y="265.9" width="13" height="13" fill="none" stroke="#fff" stroke-opacity="0.88" stroke-width="1.8"/><rect x="1317.5" y="255.1" width="13" height="13" fill="none" stroke="#fff" stroke-opacity="0.88" stroke-width="1.8"/><rect x="1255.0" y="283.8" width="13" height="13" fill="none" stroke="#fff" stroke-opacity="0.88" stroke-width="1.8"/><rect x="1201.4" y="314.1" width="13" height="13" fill="none" stroke="#fff" stroke-opacity="0.88" stroke-width="1.8"/><rect x="1201.4" y="363.5" width="13" height="13" fill="none" stroke="#fff" stroke-opacity="0.88" stroke-width="1.8"/><rect x="1199.2" y="476.0" width="13" height="13" fill="none" stroke="#fff" stroke-opacity="0.88" stroke-width="1.8"/><rect x="1336.9" y="333.7" width="13" height="13" fill="none" stroke="#fff" stroke-opacity="0.88" stroke-width="1.8"/><circle cx="1151.1" cy="150.3" r="4.3" fill="#00ff00" stroke="#111" stroke-width="1.1"/><circle cx="1174.5" cy="175.0" r="4.3" fill="#5a8a5a" stroke="#111" stroke-width="1.1"/><circle cx="1215.0" cy="165.6" r="4.3" fill="#9aaa5a" stroke="#111" stroke-width="1.1"/><circle cx="1235.3" cy="158.3" r="4.3" fill="#ffff00" stroke="#111" stroke-width="1.1"/><circle cx="1263.6" cy="162.1" r="4.3" fill="#e2c040" stroke="#111" stroke-width="1.1"/><circle cx="1296.9" cy="169.4" r="4.3" fill="#e0a848" stroke="#111" stroke-width="1.1"/><circle cx="1341.3" cy="173.4" r="4.3" fill="#d88c40" stroke="#111" stroke-width="1.1"/><circle cx="1503.3" cy="181.3" r="4.3" fill="#ff0000" stroke="#111" stroke-width="1.1"/><circle cx="1212.3" cy="188.3" r="4.3" fill="#5e6e52" stroke="#111" stroke-width="1.1"/><circle cx="1281.9" cy="203.4" r="4.3" fill="#6a4e48" stroke="#111" stroke-width="1.1"/><circle cx="1268.1" cy="210.0" r="4.3" fill="#c8a090" stroke="#111" stroke-width="1.1"/><circle cx="1360.9" cy="216.7" r="4.3" fill="#c06070" stroke="#111" stroke-width="1.1"/><circle cx="1427.2" cy="202.1" r="4.3" fill="#b04050" stroke="#111" stroke-width="1.1"/><circle cx="1182.4" cy="224.0" r="4.3" fill="#78b8a8" stroke="#111" stroke-width="1.1"/><circle cx="1166.1" cy="239.8" r="4.3" fill="#00ffff" stroke="#111" stroke-width="1.1"/><circle cx="1170.1" cy="276.9" r="4.3" fill="#2a8aa0" stroke="#111" stroke-width="1.1"/><circle cx="1203.9" cy="272.8" r="4.3" fill="#6684a8" stroke="#111" stroke-width="1.1"/><circle cx="1226.0" cy="278.5" r="4.3" fill="#8a88b8" stroke="#111" stroke-width="1.1"/><circle cx="1325.5" cy="267.4" r="4.3" fill="#c060a0" stroke="#111" stroke-width="1.1"/><circle cx="1262.9" cy="298.5" r="4.3" fill="#5a4070" stroke="#111" stroke-width="1.1"/><circle cx="1206.7" cy="329.6" r="4.3" fill="#5868a8" stroke="#111" stroke-width="1.1"/><circle cx="1206.7" cy="384.0" r="4.3" fill="#3848a0" stroke="#111" stroke-width="1.1"/><circle cx="1201.5" cy="482.5" r="4.3" fill="#0000ff" stroke="#111" stroke-width="1.1"/><circle cx="1340.3" cy="345.0" r="4.3" fill="#ff00ff" stroke="#111" stroke-width="1.1"/><circle cx="1212.6" cy="264.3" r="4.6" fill="#000"/><rect x="1222.3" y="221.3" width="12.4" height="12.4" fill="none" stroke="#000" stroke-width="2.6"/><circle cx="1228.5" cy="230" r="4.3" fill="#a8a8a8" stroke="#111" stroke-width="1.1"/></svg><div class="a" style="left:1451px;top:437px;width:205px;height:137px;background:#222"></div><svg class="a" style="left:1454px;top:440px" width="199" height="131" viewBox="0 0 199 131"><defs><linearGradient id="ga" gradientUnits="userSpaceOnUse" x1="-20" y1="0" x2="199" y2="150"><stop offset="0.06" stop-color="#5c9800"/><stop offset="0.37" stop-color="#849800"/><stop offset="0.68" stop-color="#a08e00"/><stop offset="0.95" stop-color="#946400"/></linearGradient><linearGradient id="gc" gradientUnits="userSpaceOnUse" x1="-20" y1="0" x2="199" y2="150"><stop offset="0.1" stop-color="#b4ff00"/><stop offset="0.34" stop-color="#e2ff14"/><stop offset="0.5" stop-color="#ffff14"/><stop offset="0.75" stop-color="#ffd800"/><stop offset="0.96" stop-color="#ffaa00"/></linearGradient></defs><rect x="0" y="0" width="199" height="131" fill="url(#ga)"/><polygon points="0,14.5 199,115.5 199,131 0,131" fill="url(#gc)"/><rect x="0.75" y="0.75" width="197.5" height="129.5" fill="none" stroke="#9a9a9a" stroke-width="1.5"/><rect x="91.5" y="57.5" width="14" height="14" fill="none" stroke="#fff" stroke-opacity="0.85" stroke-width="1.7"/><circle cx="99.4" cy="67.4" r="4.3" fill="#ffff00" stroke="#111" stroke-width="1.1"/></svg><div class="a" style="left:1403px;top:581px;width:252px;height:26px;background:#2a2a2a"></div><div class="t" style="left:1404.00px;top:584.50px;font-size:19px;color:#f0f0f0;transform:scaleX(1.0353);transform-origin:0 0;">RGB Triplet: 255, 255, 0</div><div class="a" style="left:321px;top:662px;width:1348px;height:227px;background:#111"></div><div class="a" style="left:323px;top:888px;width:1346px;height:1px;background:#5e5e5e"></div><div class="a" style="left:323px;top:663px;width:1346px;height:13px;background:#2e2e2e"></div><div class="a" style="left:323px;top:676px;width:1346px;height:12px;background:#141414"></div><div class="a" style="left:323px;top:688px;width:1346px;height:24px;background:#424242"></div><div class="a" style="left:323px;top:712px;width:1346px;height:23px;background:#808080;border-top:1px solid #8c8c8c;border-bottom:1px solid #8a8a8a"></div><div class="a" style="left:323px;top:735px;width:1346px;height:23px;background:#424242"></div><div class="a" style="left:323px;top:758px;width:1346px;height:23px;background:#808080;border-top:1px solid #8c8c8c;border-bottom:1px solid #8a8a8a"></div><div class="a" style="left:323px;top:781px;width:1346px;height:24px;background:#424242"></div><div class="a" style="left:323px;top:805px;width:1346px;height:23px;background:#808080;border-top:1px solid #8c8c8c;border-bottom:1px solid #8a8a8a"></div><div class="a" style="left:323px;top:828px;width:1346px;height:23px;background:#424242"></div><div class="a" style="left:323px;top:851px;width:1346px;height:23px;background:#808080;border-top:1px solid #8c8c8c;border-bottom:1px solid #8a8a8a"></div><div class="a" style="left:0;top:0;width:1669px;height:1007px;overflow:hidden"><div class="t" style="left:494.00px;top:667.62px;font-size:15px;color:#f2f2f2;transform:scaleX(1.2141);transform-origin:0 0;-webkit-text-stroke:0.35px #f2f2f2;">White</div><div class="t" style="left:555.50px;top:667.62px;font-size:15px;color:#f2f2f2;transform:scaleX(1.1292);transform-origin:0 0;-webkit-text-stroke:0.35px #f2f2f2;">Gray 80</div><div class="t" style="left:626.40px;top:667.62px;font-size:15px;color:#f2f2f2;transform:scaleX(1.1217);transform-origin:0 0;-webkit-text-stroke:0.35px #f2f2f2;">Gray 65</div><div class="t" style="left:697.00px;top:667.62px;font-size:15px;color:#f2f2f2;transform:scaleX(1.1367);transform-origin:0 0;-webkit-text-stroke:0.35px #f2f2f2;">Gray 50</div><div class="t" style="left:768.20px;top:667.62px;font-size:15px;color:#f2f2f2;transform:scaleX(1.1217);transform-origin:0 0;-webkit-text-stroke:0.35px #f2f2f2;">Gray 35</div><div class="t" style="left:841.60px;top:667.62px;font-size:15px;color:#f2f2f2;transform:scaleX(1.1196);transform-origin:0 0;-webkit-text-stroke:0.35px #f2f2f2;">Black</div><div class="t" style="left:895.40px;top:667.62px;font-size:15px;color:#f2f2f2;transform:scaleX(1.1215);transform-origin:0 0;-webkit-text-stroke:0.35px #f2f2f2;">Dark Skin</div><div class="t" style="left:979.30px;top:667.62px;font-size:15px;color:#f2f2f2;transform:scaleX(1.1320);transform-origin:0 0;-webkit-text-stroke:0.35px #f2f2f2;">Light Skin</div><div class="t" style="left:1065.30px;top:667.62px;font-size:15px;color:#f2f2f2;transform:scaleX(1.1064);transform-origin:0 0;-webkit-text-stroke:0.35px #f2f2f2;">Blue Sky</div><div class="t" style="left:1141.30px;top:667.62px;font-size:15px;color:#f2f2f2;transform:scaleX(1.1159);transform-origin:0 0;-webkit-text-stroke:0.35px #f2f2f2;">Foliage</div><div class="t" style="left:1207.70px;top:667.62px;font-size:15px;color:#f2f2f2;transform:scaleX(1.1667);transform-origin:0 0;-webkit-text-stroke:0.35px #f2f2f2;">Blue Flower</div><div class="t" style="left:1311.40px;top:667.62px;font-size:15px;color:#f2f2f2;transform:scaleX(1.1453);transform-origin:0 0;-webkit-text-stroke:0.35px #f2f2f2;">Bluish Green</div><div class="t" style="left:1422.00px;top:667.62px;font-size:15px;color:#f2f2f2;transform:scaleX(1.1320);transform-origin:0 0;-webkit-text-stroke:0.35px #f2f2f2;">Orange</div><div class="t" style="left:1489.60px;top:667.62px;font-size:15px;color:#f2f2f2;transform:scaleX(1.1686);transform-origin:0 0;-webkit-text-stroke:0.35px #f2f2f2;">Purplish Blue</div><div class="t" style="left:1603.50px;top:667.62px;font-size:15px;color:#f2f2f2;transform:scaleX(1.1800);transform-origin:0 0;-webkit-text-stroke:0.35px #f2f2f2;">Moderate Red</div><div class="t" style="left:337.50px;top:692.12px;font-size:15px;color:#f4f4f4;font-weight:bold;transform:scaleX(1.2300);transform-origin:0 0;">x: CIE31</div><div class="t" style="left:489.10px;top:692.42px;font-size:15px;color:#f0f0f0;transform:scaleX(1.2160);transform-origin:0 0;">0,31</div><div class="t" style="left:555.50px;top:692.42px;font-size:15px;color:#f0f0f0;transform:scaleX(1.2160);transform-origin:0 0;">0,31</div><div class="t" style="left:626.40px;top:692.42px;font-size:15px;color:#f0f0f0;transform:scaleX(1.2160);transform-origin:0 0;">0,31</div><div class="t" style="left:697.00px;top:692.42px;font-size:15px;color:#f0f0f0;transform:scaleX(1.2160);transform-origin:0 0;">0,31</div><div class="t" style="left:768.20px;top:692.42px;font-size:15px;color:#f0f0f0;transform:scaleX(1.2160);transform-origin:0 0;">0,31</div><div class="t" style="left:838.70px;top:692.42px;font-size:15px;color:#f0f0f0;transform:scaleX(1.2160);transform-origin:0 0;">0,26</div><div class="t" style="left:895.40px;top:692.42px;font-size:15px;color:#f0f0f0;transform:scaleX(1.2160);transform-origin:0 0;">0,40</div><div class="t" style="left:979.30px;top:692.42px;font-size:15px;color:#f0f0f0;transform:scaleX(1.2160);transform-origin:0 0;">0,38</div><div class="t" style="left:1065.30px;top:692.42px;font-size:15px;color:#f0f0f0;transform:scaleX(1.2160);transform-origin:0 0;">0,24</div><div class="t" style="left:1141.30px;top:692.42px;font-size:15px;color:#f0f0f0;transform:scaleX(1.2160);transform-origin:0 0;">0,34</div><div class="t" style="left:1207.70px;top:692.42px;font-size:15px;color:#f0f0f0;transform:scaleX(1.2160);transform-origin:0 0;">0,26</div><div class="t" style="left:1311.40px;top:692.42px;font-size:15px;color:#f0f0f0;transform:scaleX(1.2160);transform-origin:0 0;">0,26</div><div class="t" style="left:1422.00px;top:692.42px;font-size:15px;color:#f0f0f0;transform:scaleX(1.2160);transform-origin:0 0;">0,52</div><div class="t" style="left:1489.60px;top:692.42px;font-size:15px;color:#f0f0f0;transform:scaleX(1.2160);transform-origin:0 0;">0,21</div><div class="t" style="left:1603.50px;top:692.42px;font-size:15px;color:#f0f0f0;transform:scaleX(1.2160);transform-origin:0 0;">0,46</div><div class="t" style="left:337.50px;top:715.22px;font-size:15px;color:#f4f4f4;font-weight:bold;transform:scaleX(1.2300);transform-origin:0 0;">y: CIE31</div><div class="t" style="left:489.10px;top:715.52px;font-size:15px;color:#f0f0f0;transform:scaleX(1.2160);transform-origin:0 0;">0,32</div><div class="t" style="left:555.50px;top:715.52px;font-size:15px;color:#f0f0f0;transform:scaleX(1.2160);transform-origin:0 0;">0,32</div><div class="t" style="left:626.40px;top:715.52px;font-size:15px;color:#f0f0f0;transform:scaleX(1.2160);transform-origin:0 0;">0,32</div><div class="t" style="left:697.00px;top:715.52px;font-size:15px;color:#f0f0f0;transform:scaleX(1.2160);transform-origin:0 0;">0,32</div><div class="t" style="left:768.20px;top:715.52px;font-size:15px;color:#f0f0f0;transform:scaleX(1.2160);transform-origin:0 0;">0,32</div><div class="t" style="left:838.70px;top:715.52px;font-size:15px;color:#f0f0f0;transform:scaleX(1.2160);transform-origin:0 0;">0,27</div><div class="t" style="left:895.40px;top:715.52px;font-size:15px;color:#f0f0f0;transform:scaleX(1.2160);transform-origin:0 0;">0,36</div><div class="t" style="left:979.30px;top:715.52px;font-size:15px;color:#f0f0f0;transform:scaleX(1.2160);transform-origin:0 0;">0,35</div><div class="t" style="left:1065.30px;top:715.52px;font-size:15px;color:#f0f0f0;transform:scaleX(1.2160);transform-origin:0 0;">0,26</div><div class="t" style="left:1141.30px;top:715.52px;font-size:15px;color:#f0f0f0;transform:scaleX(1.2160);transform-origin:0 0;">0,43</div><div class="t" style="left:1207.70px;top:715.52px;font-size:15px;color:#f0f0f0;transform:scaleX(1.2160);transform-origin:0 0;">0,24</div><div class="t" style="left:1311.40px;top:715.52px;font-size:15px;color:#f0f0f0;transform:scaleX(1.2160);transform-origin:0 0;">0,35</div><div class="t" style="left:1422.00px;top:715.52px;font-size:15px;color:#f0f0f0;transform:scaleX(1.2160);transform-origin:0 0;">0,41</div><div class="t" style="left:1489.60px;top:715.52px;font-size:15px;color:#f0f0f0;transform:scaleX(1.2160);transform-origin:0 0;">0,18</div><div class="t" style="left:1603.50px;top:715.52px;font-size:15px;color:#f0f0f0;transform:scaleX(1.2160);transform-origin:0 0;">0,31</div><div class="t" style="left:337.50px;top:738.42px;font-size:15px;color:#f4f4f4;font-weight:bold;transform:scaleX(1.2300);transform-origin:0 0;">Y</div><div class="t" style="left:489.10px;top:738.72px;font-size:15px;color:#f0f0f0;transform:scaleX(1.2160);transform-origin:0 0;">566,92</div><div class="t" style="left:555.50px;top:738.72px;font-size:15px;color:#f0f0f0;transform:scaleX(1.2160);transform-origin:0 0;">482,02</div><div class="t" style="left:626.40px;top:738.72px;font-size:15px;color:#f0f0f0;transform:scaleX(1.2160);transform-origin:0 0;">387,58</div><div class="t" style="left:697.00px;top:738.72px;font-size:15px;color:#f0f0f0;transform:scaleX(1.2160);transform-origin:0 0;">296,18</div><div class="t" style="left:768.20px;top:738.72px;font-size:15px;color:#f0f0f0;transform:scaleX(1.2160);transform-origin:0 0;">205,13</div><div class="t" style="left:838.70px;top:738.72px;font-size:15px;color:#f0f0f0;transform:scaleX(1.2160);transform-origin:0 0;">0,46</div><div class="t" style="left:895.40px;top:738.72px;font-size:15px;color:#f0f0f0;transform:scaleX(1.2160);transform-origin:0 0;">57,82</div><div class="t" style="left:979.30px;top:738.72px;font-size:15px;color:#f0f0f0;transform:scaleX(1.2160);transform-origin:0 0;">209,21</div><div class="t" style="left:1065.30px;top:738.72px;font-size:15px;color:#f0f0f0;transform:scaleX(1.2160);transform-origin:0 0;">110,94</div><div class="t" style="left:1141.30px;top:738.72px;font-size:15px;color:#f0f0f0;transform:scaleX(1.2160);transform-origin:0 0;">75,90</div><div class="t" style="left:1207.70px;top:738.72px;font-size:15px;color:#f0f0f0;transform:scaleX(1.2160);transform-origin:0 0;">139,20</div><div class="t" style="left:1311.40px;top:738.72px;font-size:15px;color:#f0f0f0;transform:scaleX(1.2160);transform-origin:0 0;">251,12</div><div class="t" style="left:1422.00px;top:738.72px;font-size:15px;color:#f0f0f0;transform:scaleX(1.2160);transform-origin:0 0;">168,25</div><div class="t" style="left:1489.60px;top:738.72px;font-size:15px;color:#f0f0f0;transform:scaleX(1.2160);transform-origin:0 0;">68,82</div><div class="t" style="left:1603.50px;top:738.72px;font-size:15px;color:#f0f0f0;transform:scaleX(1.2160);transform-origin:0 0;">110,48</div><div class="t" style="left:337.50px;top:761.62px;font-size:15px;color:#f4f4f4;font-weight:bold;transform:scaleX(1.2300);transform-origin:0 0;">Target x:CIE31</div><div class="t" style="left:489.10px;top:761.92px;font-size:15px;color:#f0f0f0;transform:scaleX(1.2160);transform-origin:0 0;">0,31</div><div class="t" style="left:555.50px;top:761.92px;font-size:15px;color:#f0f0f0;transform:scaleX(1.2160);transform-origin:0 0;">0,31</div><div class="t" style="left:626.40px;top:761.92px;font-size:15px;color:#f0f0f0;transform:scaleX(1.2160);transform-origin:0 0;">0,31</div><div class="t" style="left:697.00px;top:761.92px;font-size:15px;color:#f0f0f0;transform:scaleX(1.2160);transform-origin:0 0;">0,31</div><div class="t" style="left:768.20px;top:761.92px;font-size:15px;color:#f0f0f0;transform:scaleX(1.2160);transform-origin:0 0;">0,31</div><div class="t" style="left:838.70px;top:761.92px;font-size:15px;color:#f0f0f0;transform:scaleX(1.2160);transform-origin:0 0;">0,31</div><div class="t" style="left:895.40px;top:761.92px;font-size:15px;color:#f0f0f0;transform:scaleX(1.2160);transform-origin:0 0;">0,40</div><div class="t" style="left:979.30px;top:761.92px;font-size:15px;color:#f0f0f0;transform:scaleX(1.2160);transform-origin:0 0;">0,38</div><div class="t" style="left:1065.30px;top:761.92px;font-size:15px;color:#f0f0f0;transform:scaleX(1.2160);transform-origin:0 0;">0,25</div><div class="t" style="left:1141.30px;top:761.92px;font-size:15px;color:#f0f0f0;transform:scaleX(1.2160);transform-origin:0 0;">0,34</div><div class="t" style="left:1207.70px;top:761.92px;font-size:15px;color:#f0f0f0;transform:scaleX(1.2160);transform-origin:0 0;">0,27</div><div class="t" style="left:1311.40px;top:761.92px;font-size:15px;color:#f0f0f0;transform:scaleX(1.2160);transform-origin:0 0;">0,26</div><div class="t" style="left:1422.00px;top:761.92px;font-size:15px;color:#f0f0f0;transform:scaleX(1.2160);transform-origin:0 0;">0,51</div><div class="t" style="left:1489.60px;top:761.92px;font-size:15px;color:#f0f0f0;transform:scaleX(1.2160);transform-origin:0 0;">0,22</div><div class="t" style="left:1603.50px;top:761.92px;font-size:15px;color:#f0f0f0;transform:scaleX(1.2160);transform-origin:0 0;">0,46</div><div class="t" style="left:337.50px;top:784.82px;font-size:15px;color:#f4f4f4;font-weight:bold;transform:scaleX(1.2300);transform-origin:0 0;">Target y:CIE31</div><div class="t" style="left:489.10px;top:785.12px;font-size:15px;color:#f0f0f0;transform:scaleX(1.2160);transform-origin:0 0;">0,33</div><div class="t" style="left:555.50px;top:785.12px;font-size:15px;color:#f0f0f0;transform:scaleX(1.2160);transform-origin:0 0;">0,33</div><div class="t" style="left:626.40px;top:785.12px;font-size:15px;color:#f0f0f0;transform:scaleX(1.2160);transform-origin:0 0;">0,33</div><div class="t" style="left:697.00px;top:785.12px;font-size:15px;color:#f0f0f0;transform:scaleX(1.2160);transform-origin:0 0;">0,33</div><div class="t" style="left:768.20px;top:785.12px;font-size:15px;color:#f0f0f0;transform:scaleX(1.2160);transform-origin:0 0;">0,33</div><div class="t" style="left:838.70px;top:785.12px;font-size:15px;color:#f0f0f0;transform:scaleX(1.2160);transform-origin:0 0;">0,33</div><div class="t" style="left:895.40px;top:785.12px;font-size:15px;color:#f0f0f0;transform:scaleX(1.2160);transform-origin:0 0;">0,36</div><div class="t" style="left:979.30px;top:785.12px;font-size:15px;color:#f0f0f0;transform:scaleX(1.2160);transform-origin:0 0;">0,36</div><div class="t" style="left:1065.30px;top:785.12px;font-size:15px;color:#f0f0f0;transform:scaleX(1.2160);transform-origin:0 0;">0,27</div><div class="t" style="left:1141.30px;top:785.12px;font-size:15px;color:#f0f0f0;transform:scaleX(1.2160);transform-origin:0 0;">0,43</div><div class="t" style="left:1207.70px;top:785.12px;font-size:15px;color:#f0f0f0;transform:scaleX(1.2160);transform-origin:0 0;">0,25</div><div class="t" style="left:1311.40px;top:785.12px;font-size:15px;color:#f0f0f0;transform:scaleX(1.2160);transform-origin:0 0;">0,36</div><div class="t" style="left:1422.00px;top:785.12px;font-size:15px;color:#f0f0f0;transform:scaleX(1.2160);transform-origin:0 0;">0,41</div><div class="t" style="left:1489.60px;top:785.12px;font-size:15px;color:#f0f0f0;transform:scaleX(1.2160);transform-origin:0 0;">0,19</div><div class="t" style="left:1603.50px;top:785.12px;font-size:15px;color:#f0f0f0;transform:scaleX(1.2160);transform-origin:0 0;">0,31</div><div class="t" style="left:337.50px;top:808.02px;font-size:15px;color:#f4f4f4;font-weight:bold;transform:scaleX(1.2300);transform-origin:0 0;">Target Y</div><div class="t" style="left:489.10px;top:808.32px;font-size:15px;color:#f0f0f0;transform:scaleX(1.2160);transform-origin:0 0;">566,92</div><div class="t" style="left:555.50px;top:808.32px;font-size:15px;color:#f0f0f0;transform:scaleX(1.2160);transform-origin:0 0;">448,61</div><div class="t" style="left:626.40px;top:808.32px;font-size:15px;color:#f0f0f0;transform:scaleX(1.2160);transform-origin:0 0;">361,47</div><div class="t" style="left:697.00px;top:808.32px;font-size:15px;color:#f0f0f0;transform:scaleX(1.2160);transform-origin:0 0;">278,37</div><div class="t" style="left:768.20px;top:808.32px;font-size:15px;color:#f0f0f0;transform:scaleX(1.2160);transform-origin:0 0;">193,84</div><div class="t" style="left:838.70px;top:808.32px;font-size:15px;color:#f0f0f0;transform:scaleX(1.2160);transform-origin:0 0;">0,00</div><div class="t" style="left:895.40px;top:808.32px;font-size:15px;color:#f0f0f0;transform:scaleX(1.2160);transform-origin:0 0;">57,11</div><div class="t" style="left:979.30px;top:808.32px;font-size:15px;color:#f0f0f0;transform:scaleX(1.2160);transform-origin:0 0;">197,83</div><div class="t" style="left:1065.30px;top:808.32px;font-size:15px;color:#f0f0f0;transform:scaleX(1.2160);transform-origin:0 0;">106,01</div><div class="t" style="left:1141.30px;top:808.32px;font-size:15px;color:#f0f0f0;transform:scaleX(1.2160);transform-origin:0 0;">73,88</div><div class="t" style="left:1207.70px;top:808.32px;font-size:15px;color:#f0f0f0;transform:scaleX(1.2160);transform-origin:0 0;">132,20</div><div class="t" style="left:1311.40px;top:808.32px;font-size:15px;color:#f0f0f0;transform:scaleX(1.2160);transform-origin:0 0;">237,39</div><div class="t" style="left:1422.00px;top:808.32px;font-size:15px;color:#f0f0f0;transform:scaleX(1.2160);transform-origin:0 0;">160,71</div><div class="t" style="left:1489.60px;top:808.32px;font-size:15px;color:#f0f0f0;transform:scaleX(1.2160);transform-origin:0 0;">66,64</div><div class="t" style="left:1603.50px;top:808.32px;font-size:15px;color:#f0f0f0;transform:scaleX(1.2160);transform-origin:0 0;">105,88</div><div class="t" style="left:337.50px;top:831.22px;font-size:15px;color:#f4f4f4;font-weight:bold;transform:scaleX(1.2300);transform-origin:0 0;">ΔE 2000</div><div class="t" style="left:489.10px;top:831.52px;font-size:15px;color:#f0f0f0;transform:scaleX(1.2160);transform-origin:0 0;">2,14</div><div class="t" style="left:555.50px;top:831.52px;font-size:15px;color:#f0f0f0;transform:scaleX(1.2160);transform-origin:0 0;">2,98</div><div class="t" style="left:626.40px;top:831.52px;font-size:15px;color:#f0f0f0;transform:scaleX(1.2160);transform-origin:0 0;">2,97</div><div class="t" style="left:697.00px;top:831.52px;font-size:15px;color:#f0f0f0;transform:scaleX(1.2160);transform-origin:0 0;">2,87</div><div class="t" style="left:768.20px;top:831.52px;font-size:15px;color:#f0f0f0;transform:scaleX(1.2160);transform-origin:0 0;">2,91</div><div class="t" style="left:838.70px;top:831.52px;font-size:15px;color:#f0f0f0;transform:scaleX(1.2160);transform-origin:0 0;">0,89</div><div class="t" style="left:895.40px;top:831.52px;font-size:15px;color:#f0f0f0;transform:scaleX(1.2160);transform-origin:0 0;">1,07</div><div class="t" style="left:979.30px;top:831.52px;font-size:15px;color:#f0f0f0;transform:scaleX(1.2160);transform-origin:0 0;">2,29</div><div class="t" style="left:1065.30px;top:831.52px;font-size:15px;color:#f0f0f0;transform:scaleX(1.2160);transform-origin:0 0;">1,79</div><div class="t" style="left:1141.30px;top:831.52px;font-size:15px;color:#f0f0f0;transform:scaleX(1.2160);transform-origin:0 0;">0,50</div><div class="t" style="left:1207.70px;top:831.52px;font-size:15px;color:#f0f0f0;transform:scaleX(1.2160);transform-origin:0 0;">1,99</div><div class="t" style="left:1311.40px;top:831.52px;font-size:15px;color:#f0f0f0;transform:scaleX(1.2160);transform-origin:0 0;">2,05</div><div class="t" style="left:1422.00px;top:831.52px;font-size:15px;color:#f0f0f0;transform:scaleX(1.2160);transform-origin:0 0;">1,30</div><div class="t" style="left:1489.60px;top:831.52px;font-size:15px;color:#f0f0f0;transform:scaleX(1.2160);transform-origin:0 0;">1,45</div><div class="t" style="left:1603.50px;top:831.52px;font-size:15px;color:#f0f0f0;transform:scaleX(1.2160);transform-origin:0 0;">1,44</div><div class="t" style="left:337.50px;top:854.42px;font-size:15px;color:#f4f4f4;font-weight:bold;transform:scaleX(1.2300);transform-origin:0 0;">ΔE ITP</div><div class="t" style="left:489.10px;top:854.72px;font-size:15px;color:#f0f0f0;transform:scaleX(1.2160);transform-origin:0 0;">2,05</div><div class="t" style="left:555.50px;top:854.72px;font-size:15px;color:#f0f0f0;transform:scaleX(1.2160);transform-origin:0 0;">6,13</div><div class="t" style="left:626.40px;top:854.72px;font-size:15px;color:#f0f0f0;transform:scaleX(1.2160);transform-origin:0 0;">6,02</div><div class="t" style="left:697.00px;top:854.72px;font-size:15px;color:#f0f0f0;transform:scaleX(1.2160);transform-origin:0 0;">5,47</div><div class="t" style="left:768.20px;top:854.72px;font-size:15px;color:#f0f0f0;transform:scaleX(1.2160);transform-origin:0 0;">5,24</div><div class="t" style="left:838.70px;top:854.72px;font-size:15px;color:#f0f0f0;transform:scaleX(1.2160);transform-origin:0 0;">83,76</div><div class="t" style="left:895.40px;top:854.72px;font-size:15px;color:#f0f0f0;transform:scaleX(1.2160);transform-origin:0 0;">2,73</div><div class="t" style="left:979.30px;top:854.72px;font-size:15px;color:#f0f0f0;transform:scaleX(1.2160);transform-origin:0 0;">5,02</div><div class="t" style="left:1065.30px;top:854.72px;font-size:15px;color:#f0f0f0;transform:scaleX(1.2160);transform-origin:0 0;">5,74</div><div class="t" style="left:1141.30px;top:854.72px;font-size:15px;color:#f0f0f0;transform:scaleX(1.2160);transform-origin:0 0;">1,91</div><div class="t" style="left:1207.70px;top:854.72px;font-size:15px;color:#f0f0f0;transform:scaleX(1.2160);transform-origin:0 0;">5,50</div><div class="t" style="left:1311.40px;top:854.72px;font-size:15px;color:#f0f0f0;transform:scaleX(1.2160);transform-origin:0 0;">5,34</div><div class="t" style="left:1422.00px;top:854.72px;font-size:15px;color:#f0f0f0;transform:scaleX(1.2160);transform-origin:0 0;">5,26</div><div class="t" style="left:1489.60px;top:854.72px;font-size:15px;color:#f0f0f0;transform:scaleX(1.2160);transform-origin:0 0;">6,80</div><div class="t" style="left:1603.50px;top:854.72px;font-size:15px;color:#f0f0f0;transform:scaleX(1.2160);transform-origin:0 0;">5,50</div></div><div class="a" style="left:323px;top:874px;width:1346px;height:15px;background:#5e5e5e;border-top:1px solid #707070;border-bottom:1px solid #6a6a6a"></div><div class="a" style="left:344px;top:876px;width:644px;height:12px;background:#454545;border-radius:6px"></div><div class="a" style="left:323.5px;top:876px;width:18px;height:12.5px;background:#7a7a7a;border-radius:3px"></div><div class="a" style="left:329.5px;top:877.5px;width:0;height:0;border-top:4.7px solid transparent;border-bottom:4.7px solid transparent;border-right:7px solid #333"></div><div class="a" style="left:1649.5px;top:876px;width:15.5px;height:12px;background:#7a7a7a;border-radius:3px"></div><div class="a" style="left:1654px;top:877.5px;width:0;height:0;border-top:4.5px solid transparent;border-bottom:4.5px solid transparent;border-left:6.5px solid #444"></div><div class="a" style="left:321px;top:889px;width:2px;height:0px;"></div><div class="a" style="left:0;top:930px;width:1265px;height:61px;overflow:hidden"><div class="a" style="left:-32.4px;top:1px;width:62px;height:60px;border-radius:5px;background:linear-gradient(#b0b0b0,#959595 55%,#808080);box-shadow:inset 0 1px 0 #c4c4c4"></div><div class="a" style="left:-25.4px;top:7px;width:49px;height:15px;border-radius:4px;background:#8884b6;box-shadow:inset 2px 2px 2px rgba(0,0,0,0.22),0 0.5px 1px rgba(0,0,0,0.25)"></div><div class="a" style="left:32.6px;top:1px;width:62px;height:60px;border-radius:5px;background:linear-gradient(#b0b0b0,#959595 55%,#808080);box-shadow:inset 0 1px 0 #c4c4c4"></div><div class="a" style="left:39.6px;top:7px;width:49px;height:15px;border-radius:4px;background:#67bdaa;box-shadow:inset 2px 2px 2px rgba(0,0,0,0.22),0 0.5px 1px rgba(0,0,0,0.25)"></div><div class="a" style="left:97.6px;top:1px;width:62px;height:60px;border-radius:5px;background:linear-gradient(#b0b0b0,#959595 55%,#808080);box-shadow:inset 0 1px 0 #c4c4c4"></div><div class="a" style="left:104.6px;top:7px;width:49px;height:30px;border-radius:4px;background:#d67e2c;box-shadow:inset 2px 2px 2px rgba(0,0,0,0.22),0 0.5px 1px rgba(0,0,0,0.25)"></div><div class="a" style="left:162.6px;top:1px;width:62px;height:60px;border-radius:5px;background:linear-gradient(#b0b0b0,#959595 55%,#808080);box-shadow:inset 0 1px 0 #c4c4c4"></div><div class="a" style="left:169.6px;top:7px;width:49px;height:15px;border-radius:4px;background:#505ba6;box-shadow:inset 2px 2px 2px rgba(0,0,0,0.22),0 0.5px 1px rgba(0,0,0,0.25)"></div><div class="a" style="left:227.6px;top:1px;width:62px;height:60px;border-radius:5px;background:linear-gradient(#b0b0b0,#959595 55%,#808080);box-shadow:inset 0 1px 0 #c4c4c4"></div><div class="a" style="left:234.6px;top:7px;width:49px;height:15px;border-radius:4px;background:#c15a63;box-shadow:inset 2px 2px 2px rgba(0,0,0,0.22),0 0.5px 1px rgba(0,0,0,0.25)"></div><div class="a" style="left:292.6px;top:1px;width:62px;height:60px;border-radius:5px;background:linear-gradient(#b0b0b0,#959595 55%,#808080);box-shadow:inset 0 1px 0 #c4c4c4"></div><div class="a" style="left:299.6px;top:7px;width:49px;height:30px;border-radius:4px;background:#5e3c6c;box-shadow:inset 2px 2px 2px rgba(0,0,0,0.22),0 0.5px 1px rgba(0,0,0,0.25)"></div><div class="a" style="left:357.6px;top:1px;width:62px;height:60px;border-radius:5px;background:linear-gradient(#b0b0b0,#959595 55%,#808080);box-shadow:inset 0 1px 0 #c4c4c4"></div><div class="a" style="left:364.6px;top:7px;width:49px;height:15px;border-radius:4px;background:#9dbc40;box-shadow:inset 2px 2px 2px rgba(0,0,0,0.22),0 0.5px 1px rgba(0,0,0,0.25)"></div><div class="a" style="left:422.6px;top:1px;width:62px;height:60px;border-radius:5px;background:linear-gradient(#b0b0b0,#959595 55%,#808080);box-shadow:inset 0 1px 0 #c4c4c4"></div><div class="a" style="left:429.6px;top:7px;width:49px;height:15px;border-radius:4px;background:#e0a32e;box-shadow:inset 2px 2px 2px rgba(0,0,0,0.22),0 0.5px 1px rgba(0,0,0,0.25)"></div><div class="a" style="left:487.6px;top:1px;width:62px;height:60px;border-radius:5px;background:linear-gradient(#b0b0b0,#959595 55%,#808080);box-shadow:inset 0 1px 0 #c4c4c4"></div><div class="a" style="left:494.6px;top:7px;width:49px;height:30px;border-radius:4px;background:#383d96;box-shadow:inset 2px 2px 2px rgba(0,0,0,0.22),0 0.5px 1px rgba(0,0,0,0.25)"></div><div class="a" style="left:552.6px;top:1px;width:62px;height:60px;border-radius:5px;background:linear-gradient(#b0b0b0,#959595 55%,#808080);box-shadow:inset 0 1px 0 #c4c4c4"></div><div class="a" style="left:559.6px;top:7px;width:49px;height:30px;border-radius:4px;background:#469449;box-shadow:inset 2px 2px 2px rgba(0,0,0,0.22),0 0.5px 1px rgba(0,0,0,0.25)"></div><div class="a" style="left:617.6px;top:1px;width:62px;height:60px;border-radius:5px;background:linear-gradient(#b0b0b0,#959595 55%,#808080);box-shadow:inset 0 1px 0 #c4c4c4"></div><div class="a" style="left:624.6px;top:7px;width:49px;height:30px;border-radius:4px;background:#af363c;box-shadow:inset 2px 2px 2px rgba(0,0,0,0.22),0 0.5px 1px rgba(0,0,0,0.25)"></div><div class="a" style="left:682.6px;top:1px;width:62px;height:60px;border-radius:5px;background:linear-gradient(#b0b0b0,#959595 55%,#808080);box-shadow:inset 0 1px 0 #c4c4c4"></div><div class="a" style="left:689.6px;top:7px;width:49px;height:30px;border-radius:4px;background:#e7c71f;box-shadow:inset 2px 2px 2px rgba(0,0,0,0.22),0 0.5px 1px rgba(0,0,0,0.25)"></div><div class="a" style="left:747.6px;top:1px;width:62px;height:60px;border-radius:5px;background:linear-gradient(#b0b0b0,#959595 55%,#808080);box-shadow:inset 0 1px 0 #c4c4c4"></div><div class="a" style="left:754.6px;top:7px;width:49px;height:30px;border-radius:4px;background:#bb5695;box-shadow:inset 2px 2px 2px rgba(0,0,0,0.22),0 0.5px 1px rgba(0,0,0,0.25)"></div><div class="a" style="left:812.6px;top:1px;width:62px;height:60px;border-radius:5px;background:linear-gradient(#b0b0b0,#959595 55%,#808080);box-shadow:inset 0 1px 0 #c4c4c4"></div><div class="a" style="left:819.6px;top:7px;width:49px;height:30px;border-radius:4px;background:#0885a1;box-shadow:inset 2px 2px 2px rgba(0,0,0,0.22),0 0.5px 1px rgba(0,0,0,0.25)"></div><div class="a" style="left:877.6px;top:1px;width:62px;height:60px;border-radius:5px;background:linear-gradient(#b0b0b0,#959595 55%,#808080);box-shadow:inset 0 1px 0 #c4c4c4"></div><div class="a" style="left:884.6px;top:7px;width:49px;height:30px;border-radius:4px;background:#ff0000;box-shadow:inset 2px 2px 2px rgba(0,0,0,0.22),0 0.5px 1px rgba(0,0,0,0.25)"></div><div class="a" style="left:942.6px;top:1px;width:62px;height:60px;border-radius:5px;background:linear-gradient(#b0b0b0,#959595 55%,#808080);box-shadow:inset 0 1px 0 #c4c4c4"></div><div class="a" style="left:949.6px;top:7px;width:49px;height:15px;border-radius:4px;background:#00ff00;box-shadow:inset 2px 2px 2px rgba(0,0,0,0.22),0 0.5px 1px rgba(0,0,0,0.25)"></div><div class="a" style="left:1007.6px;top:1px;width:62px;height:60px;border-radius:5px;background:linear-gradient(#b0b0b0,#959595 55%,#808080);box-shadow:inset 0 1px 0 #c4c4c4"></div><div class="a" style="left:1014.6px;top:7px;width:49px;height:15px;border-radius:4px;background:#0000ff;box-shadow:inset 2px 2px 2px rgba(0,0,0,0.22),0 0.5px 1px rgba(0,0,0,0.25)"></div><div class="a" style="left:1072.6px;top:1px;width:62px;height:60px;border-radius:5px;background:linear-gradient(#b0b0b0,#959595 55%,#808080);box-shadow:inset 0 1px 0 #c4c4c4"></div><div class="a" style="left:1079.6px;top:7px;width:49px;height:15px;border-radius:4px;background:#00ffff;box-shadow:inset 2px 2px 2px rgba(0,0,0,0.22),0 0.5px 1px rgba(0,0,0,0.25)"></div><div class="a" style="left:1137.6px;top:1px;width:62px;height:60px;border-radius:5px;background:linear-gradient(#b0b0b0,#959595 55%,#808080);box-shadow:inset 0 1px 0 #c4c4c4"></div><div class="a" style="left:1144.6px;top:7px;width:49px;height:15px;border-radius:4px;background:#ff00ff;box-shadow:inset 2px 2px 2px rgba(0,0,0,0.22),0 0.5px 1px rgba(0,0,0,0.25)"></div><div class="a" style="left:1202.6px;top:1px;width:62px;height:60px;border-radius:5px;background:#242424"></div><div class="a" style="left:1209.6px;top:7px;width:49px;height:15px;border-radius:4px;background:#ffff00;box-shadow:inset 2px 2px 2px rgba(0,0,0,0.22),0 0.5px 1px rgba(0,0,0,0.25)"></div></div><div class="a" style="left:0;top:930px;width:1265px;height:61px;overflow:hidden"><div class="t" style="left:-22.74px;top:29.13px;font-size:13px;color:#262630;font-weight:bold;transform:scaleX(0.9700);transform-origin:0 0;">Blue</div><div class="t" style="left:-22.74px;top:44.23px;font-size:13px;color:#262630;font-weight:bold;transform:scaleX(0.9700);transform-origin:0 0;">Flower</div><div class="t" style="left:44.35px;top:29.13px;font-size:13px;color:#262630;font-weight:bold;transform:scaleX(0.9700);transform-origin:0 0;">Bluish</div><div class="t" style="left:44.35px;top:44.23px;font-size:13px;color:#262630;font-weight:bold;transform:scaleX(0.9700);transform-origin:0 0;">Green</div><div class="t" style="left:106.53px;top:44.23px;font-size:13px;color:#262630;font-weight:bold;transform:scaleX(0.9700);transform-origin:0 0;">Orange</div><div class="t" style="left:168.38px;top:29.13px;font-size:13px;color:#262630;font-weight:bold;transform:scaleX(0.9700);transform-origin:0 0;">Purplish</div><div class="t" style="left:168.38px;top:44.23px;font-size:13px;color:#262630;font-weight:bold;transform:scaleX(0.9700);transform-origin:0 0;">Blue</div><div class="t" style="left:230.57px;top:29.13px;font-size:13px;color:#262630;font-weight:bold;transform:scaleX(0.9700);transform-origin:0 0;">Moderate</div><div class="t" style="left:230.57px;top:44.23px;font-size:13px;color:#262630;font-weight:bold;transform:scaleX(0.9700);transform-origin:0 0;">Red</div><div class="t" style="left:303.96px;top:44.23px;font-size:13px;color:#262630;font-weight:bold;transform:scaleX(0.9700);transform-origin:0 0;">Purple</div><div class="t" style="left:368.96px;top:29.13px;font-size:13px;color:#262630;font-weight:bold;transform:scaleX(0.9700);transform-origin:0 0;">Yellow</div><div class="t" style="left:368.96px;top:44.23px;font-size:13px;color:#262630;font-weight:bold;transform:scaleX(0.9700);transform-origin:0 0;">Green</div><div class="t" style="left:431.53px;top:29.13px;font-size:13px;color:#262630;font-weight:bold;transform:scaleX(0.9700);transform-origin:0 0;">Orange</div><div class="t" style="left:431.53px;top:44.23px;font-size:13px;color:#262630;font-weight:bold;transform:scaleX(0.9700);transform-origin:0 0;">Yellow</div><div class="t" style="left:504.92px;top:44.23px;font-size:13px;color:#262630;font-weight:bold;transform:scaleX(0.9700);transform-origin:0 0;">Blue</div><div class="t" style="left:565.36px;top:44.23px;font-size:13px;color:#262630;font-weight:bold;transform:scaleX(0.9700);transform-origin:0 0;">Green</div><div class="t" style="left:636.67px;top:44.23px;font-size:13px;color:#262630;font-weight:bold;transform:scaleX(0.9700);transform-origin:0 0;">Red</div><div class="t" style="left:693.96px;top:44.23px;font-size:13px;color:#262630;font-weight:bold;transform:scaleX(0.9700);transform-origin:0 0;">Yellow</div><div class="t" style="left:752.94px;top:44.23px;font-size:13px;color:#262630;font-weight:bold;transform:scaleX(0.9700);transform-origin:0 0;">Magenta</div><div class="t" style="left:828.18px;top:44.23px;font-size:13px;color:#262630;font-weight:bold;transform:scaleX(0.9700);transform-origin:0 0;">Cyan</div><div class="t" style="left:878.82px;top:44.23px;font-size:13px;color:#262630;font-weight:bold;transform:scaleX(0.9700);transform-origin:0 0;">100% Red</div><div class="t" style="left:955.36px;top:29.13px;font-size:13px;color:#262630;font-weight:bold;transform:scaleX(0.9700);transform-origin:0 0;">100%</div><div class="t" style="left:955.36px;top:44.23px;font-size:13px;color:#262630;font-weight:bold;transform:scaleX(0.9700);transform-origin:0 0;">Green</div><div class="t" style="left:1022.50px;top:29.13px;font-size:13px;color:#262630;font-weight:bold;transform:scaleX(0.9700);transform-origin:0 0;">100%</div><div class="t" style="left:1022.50px;top:44.23px;font-size:13px;color:#262630;font-weight:bold;transform:scaleX(0.9700);transform-origin:0 0;">Blue</div><div class="t" style="left:1087.50px;top:29.13px;font-size:13px;color:#262630;font-weight:bold;transform:scaleX(0.9700);transform-origin:0 0;">100%</div><div class="t" style="left:1087.50px;top:44.23px;font-size:13px;color:#262630;font-weight:bold;transform:scaleX(0.9700);transform-origin:0 0;">Cyan</div><div class="t" style="left:1142.94px;top:29.13px;font-size:13px;color:#262630;font-weight:bold;transform:scaleX(0.9700);transform-origin:0 0;">100%</div><div class="t" style="left:1142.94px;top:44.23px;font-size:13px;color:#262630;font-weight:bold;transform:scaleX(0.9700);transform-origin:0 0;">Magenta</div><div class="t" style="left:1213.96px;top:29.13px;font-size:13px;color:#ffffff;font-weight:bold;transform:scaleX(0.9700);transform-origin:0 0;">100%</div><div class="t" style="left:1213.96px;top:44.23px;font-size:13px;color:#ffffff;font-weight:bold;transform:scaleX(0.9700);transform-origin:0 0;">Yellow</div></div><div class="a" style="left:0px;top:991px;width:1265px;height:16px;background:#5e5e5e"></div><div class="a" style="left:450px;top:993px;width:795px;height:12px;background:#484848;border-radius:6px"></div><div class="a" style="left:1px;top:992px;width:14px;height:14px;background:linear-gradient(#8a8a8a,#6a6a6a);border-radius:2px"></div><div class="a" style="left:5px;top:994px;width:0;height:0;border-top:5px solid transparent;border-bottom:5px solid transparent;border-right:5px solid #333"></div><div class="a" style="left:1250px;top:992px;width:13px;height:14px;background:linear-gradient(#8a8a8a,#6a6a6a);border-radius:2px"></div><div class="a" style="left:1254px;top:994px;width:0;height:0;border-top:5px solid transparent;border-bottom:5px solid transparent;border-left:5px solid #333"></div><div class="a" style="left:1266px;top:930px;width:60px;height:77px;background:linear-gradient(#b4b4b4,#8c8c8c 28%,#a6a6a6 30%,#7c7c7c);border-radius:6px 6px 0 0"></div><div class="a" style="left:1266px;top:952px;width:60px;height:2px;background:#3e3e3e"></div><div class="a" style="left:1286.9px;top:932.5px;width:19.0px;height:19.0px;border-radius:50%;background:linear-gradient(#808080,#b0b0b0)"></div><div class="a" style="left:1291px;top:938.5px;width:0;height:0;border-left:5.5px solid transparent;border-right:5.5px solid transparent;border-bottom:6px solid #333"></div><div class="a" style="left:1276px;top:961px;width:40px;height:39px;background:linear-gradient(#b8b8b8 50%,#9a9a9a 50%);border:3px solid #1c1c1c;border-radius:6px"></div><div class="a" style="left:1288px;top:972px;width:17px;height:17px;background:linear-gradient(#1e1e1e 40%,#000 40%)"></div><div class="a" style="left:1327px;top:930px;width:58px;height:38px;background:linear-gradient(#bababa,#909090 65%,#7e7e7e);border-radius:5px 0 0 0;"></div><div class="a" style="left:1387px;top:930px;width:54px;height:38px;background:linear-gradient(#bababa,#909090 65%,#7e7e7e);"></div><div class="a" style="left:1443px;top:930px;width:54px;height:38px;background:linear-gradient(#bababa,#909090 65%,#7e7e7e);"></div><div class="a" style="left:1498px;top:930px;width:56px;height:38px;background:linear-gradient(#bababa,#909090 65%,#7e7e7e);border-radius:5px 0 0 0;"></div><div class="a" style="left:1555px;top:930px;width:55px;height:38px;background:#303030;"></div><div class="a" style="left:1611px;top:930px;width:58px;height:38px;background:linear-gradient(#bababa,#909090 65%,#7e7e7e);"></div><div class="a" style="left:1385px;top:930px;width:2px;height:38px;background:#3a3a3a"></div><div class="a" style="left:1441px;top:930px;width:2px;height:38px;background:#3a3a3a"></div><div class="a" style="left:1497px;top:930px;width:2px;height:38px;background:#3a3a3a"></div><div class="a" style="left:1554px;top:930px;width:1px;height:38px;background:#3a3a3a"></div><div class="a" style="left:1610px;top:930px;width:1px;height:38px;background:#3a3a3a"></div><div class="a" style="left:1343.7px;top:936.5px;width:25.0px;height:25.0px;border-radius:50%;background:linear-gradient(#868686,#b4b4b4)"></div><div class="a" style="left:1401.2px;top:936.5px;width:25.0px;height:25.0px;border-radius:50%;background:linear-gradient(#868686,#b4b4b4)"></div><div class="a" style="left:1457.2px;top:936.5px;width:25.0px;height:25.0px;border-radius:50%;background:linear-gradient(#868686,#b4b4b4)"></div><div class="a" style="left:1513.7px;top:936.5px;width:25.0px;height:25.0px;border-radius:50%;background:linear-gradient(#868686,#b4b4b4)"></div><div class="a" style="left:1570.2px;top:936.5px;width:25.0px;height:25.0px;border-radius:50%;background:linear-gradient(#2a2a2a,#3a3a3a)"></div><div class="a" style="left:1627.1px;top:936.5px;width:25.0px;height:25.0px;border-radius:50%;background:linear-gradient(#868686,#b4b4b4)"></div><div class="a" style="left:1351.6px;top:944.6px;width:9.5px;height:9.5px;background:#333"></div><div class="a" style="left:1410px;top:944px;width:0;height:0;border-top:6px solid transparent;border-bottom:6px solid transparent;border-left:10.5px solid #2a2a2a"></div><svg class="a" style="left:1461px;top:942px" width="18" height="16" viewBox="0 0 18 16"><g fill="none" stroke="#2e2e2e" stroke-width="2.3"><path d="M5 1.6 H2.3 V14.4 H5"/><path d="M13 1.6 H15.7 V14.4 H13"/></g><g fill="#2e2e2e"><circle cx="6.8" cy="7.8" r="1.1"/><circle cx="10.9" cy="7.8" r="1.1"/></g></svg><svg class="a" style="left:1516px;top:943px" width="20" height="11" viewBox="0 0 20 11"><path d="M10 5.5 C7 1.2 2 1.2 2 5.5 C2 9.8 7 9.8 10 5.5 C13 1.2 18 1.2 18 5.5 C18 9.8 13 9.8 10 5.5Z" fill="none" stroke="#333" stroke-width="2"/></svg><svg class="a" style="left:1573.5px;top:940.5px" width="18" height="18" viewBox="0 0 18 18"><g fill="none" stroke="#141414" stroke-width="2.6"><path d="M3.5 7.5 A5.8 5.8 0 0 1 13.8 5.2"/><path d="M14.5 10.5 A5.8 5.8 0 0 1 4.2 12.8"/></g><path d="M11 1.5 L16 4.8 L11.2 8Z" fill="#141414"/><path d="M7 16.5 L2 13.2 L6.8 10Z" fill="#141414"/></svg><div class="a" style="left:1327px;top:968px;width:342px;height:1px;background:#3a3a3a"></div><div class="a" style="left:1327px;top:969px;width:170px;height:38px;background:linear-gradient(#b4b4b4,#9a9a9a 40%,#848484);border-radius:5px 0 0 0"></div><div class="a" style="left:1498px;top:969px;width:171px;height:38px;background:linear-gradient(#b4b4b4,#9a9a9a 40%,#848484);border-radius:5px 0 0 0"></div><div class="a" style="left:1496px;top:969px;width:2px;height:38px;background:#3a3a3a"></div><div class="a" style="left:1353.4px;top:975.1px;width:25.0px;height:25.0px;border-radius:50%;background:linear-gradient(#868686,#b4b4b4)"></div><div class="a" style="left:1619.5px;top:975.1px;width:25.0px;height:25.0px;border-radius:50%;background:linear-gradient(#868686,#b4b4b4)"></div><svg class="a" style="left:1358px;top:981px" width="16" height="14" viewBox="0 0 16 14"><g fill="none" stroke="#333" stroke-width="2"><path d="M7.5 1.5 L2.5 7 L7.5 12.5"/><path d="M13 1.5 L8 7 L13 12.5"/></g></svg><svg class="a" style="left:1624px;top:981px" width="16" height="14" viewBox="0 0 16 14"><g fill="none" stroke="#333" stroke-width="2"><path d="M3 1.5 L8 7 L3 12.5"/><path d="M8.5 1.5 L13.5 7 L8.5 12.5"/></g></svg><div class="t" style="left:1400.00px;top:972.87px;font-size:27px;color:#333;transform:scaleX(1.0233);transform-origin:0 0;-webkit-text-stroke:0.7px #333;">Back</div><div class="t" style="left:1533.70px;top:972.87px;font-size:27px;color:#333;transform:scaleX(1.1441);transform-origin:0 0;-webkit-text-stroke:0.7px #333;">Next</div><div class="a" style="left:1666px;top:39px;width:3px;height:968px;background:#161616"></div><div class="a" style="left:0px;top:39px;width:1.5px;height:968px;background:#202020"></div></body></html>
